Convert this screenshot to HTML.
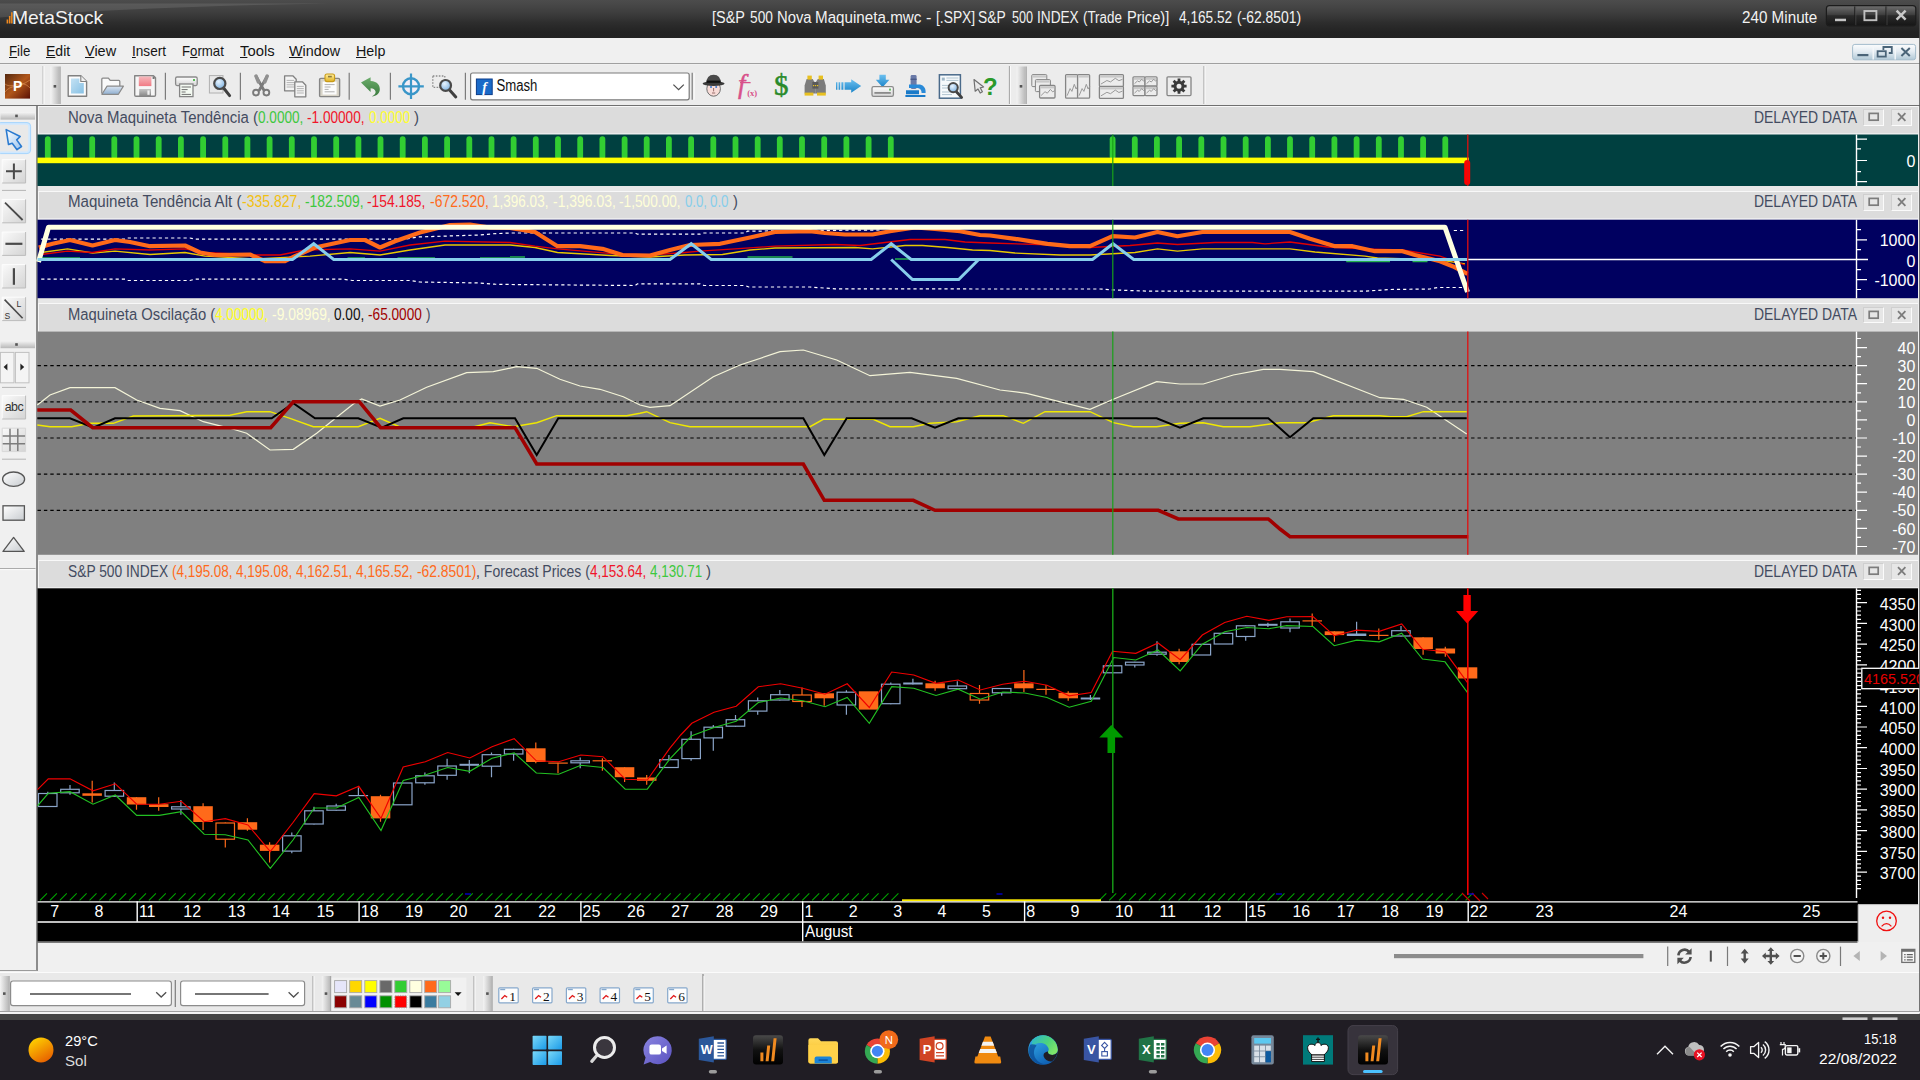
<!DOCTYPE html>
<html><head><meta charset="utf-8"><title>MetaStock</title><style>
*{box-sizing:border-box}
html,body{margin:0;padding:0}
body{width:1920px;height:1080px;position:relative;overflow:hidden;background:#f0f0f0;font-family:"Liberation Sans",sans-serif;}
.abs{position:absolute}
#title{left:0;top:0;width:1920px;height:38px;background:linear-gradient(180deg,#4c4c4c 0,#484848 4px,#3d3d3d 13px,#2d2d2d 23px,#232323 32px,#222 38px);color:#fff}
#title .t{position:absolute;white-space:nowrap;color:#f4f4f4}
#menu{left:0;top:38px;width:1920px;height:26px;background:#f0f0f0;border-bottom:1px solid #a0a0a0}

#menu u{text-decoration:underline;text-underline-offset:1.5px}
#tool{left:0;top:65px;width:1920px;height:41px;background:#ececec;border-bottom:1.2px solid #707070}
.hdr{left:37.5px;width:1880.5px;height:28.4px;background:#dcdcdc;border-top:1.3px solid #f8f8f8;border-bottom:1.3px solid #ececec;border-left:1.3px solid #f6f6f6}
.htx{left:0;width:1920px;height:28px}
.s{position:absolute;white-space:pre;line-height:1;transform-origin:0 0}
.htx .s{top:4.5px}
.hb{width:21px;height:16.5px;background:#e6e6e6;border:1px solid;border-color:#cfcfcf #fbfbfb #fbfbfb #cfcfcf}
.gap{left:37.5px;width:1880.5px;height:5.4px;background:#e7e7e7}
#left{left:0;top:106px;width:37.5px;height:865px;background:#f0f0f0;border-right:2px solid #8c8c8c;border-bottom:1px solid #9a9a9a}
.lb{position:absolute;left:2px;width:23.5px;height:23.5px;background:linear-gradient(135deg,#f6f6f6,#dadada);border:1px solid;border-color:#fdfdfd #c4c4c4 #c4c4c4 #fdfdfd}
#bot{left:0;top:972px;width:1920px;height:41px;background:#e9e9e9;border-top:1px solid #fbfbfb}
.combo{position:absolute;top:8.5px;height:25px;background:#fff;border:1px solid #8f8f8f;border-radius:2.5px}
#task{left:0;top:1014px;width:1920px;height:66px;background:#201d24;border-top:6px solid #454545}
#task .w{position:absolute;color:#fff;white-space:nowrap}
</style></head><body>
<div id="title" class="abs">
<span class="s" style="left:11.70px;top:7.8px;transform:scale(1.0161,1);color:#f2f2f2;font-size:19.0px;">MetaStock</span><span class="s" style="left:712.20px;top:10.0px;transform:scale(0.9254,1);color:#f2f2f2;font-size:15.6px;">[S&amp;P</span><span class="s" style="left:749.70px;top:10.0px;transform:scale(0.8799,1);color:#f2f2f2;font-size:15.6px;">500</span><span class="s" style="left:776.80px;top:10.0px;transform:scale(0.9501,1);color:#f2f2f2;font-size:15.6px;">Nova</span><span class="s" style="left:814.80px;top:10.0px;transform:scale(0.9740,1);color:#f2f2f2;font-size:15.6px;">Maquineta.mwc</span><span class="s" style="left:926.30px;top:10.0px;transform:scale(1.0396,1);color:#f2f2f2;font-size:15.6px;">-</span><span class="s" style="left:935.50px;top:10.0px;transform:scale(0.8865,1);color:#f2f2f2;font-size:15.6px;">[.SPX]</span><span class="s" style="left:978.05px;top:10.0px;transform:scale(0.8857,1);color:#f2f2f2;font-size:15.6px;">S&amp;P</span><span class="s" style="left:1011.80px;top:10.0px;transform:scale(0.8108,1);color:#f2f2f2;font-size:15.6px;">500</span><span class="s" style="left:1037.10px;top:10.0px;transform:scale(0.8746,1);color:#f2f2f2;font-size:15.6px;">INDEX</span><span class="s" style="left:1083.05px;top:10.0px;transform:scale(0.8575,1);color:#f2f2f2;font-size:15.6px;">(Trade</span><span class="s" style="left:1126.55px;top:10.0px;transform:scale(0.9374,1);color:#f2f2f2;font-size:15.6px;">Price)]</span><span class="s" style="left:1179.05px;top:10.0px;transform:scale(0.8754,1);color:#f2f2f2;font-size:15.6px;">4,165.52</span><span class="s" style="left:1236.80px;top:10.0px;transform:scale(0.8921,1);color:#f2f2f2;font-size:15.6px;">(-62.8501)</span><span class="s" style="left:1741.60px;top:10.0px;transform:scale(0.9757,1);color:#f2f2f2;font-size:15.6px;">240 Minute</span>
</div>
<div id="menu" class="abs"></div><span class="s" style="left:8.50px;top:44.0px;transform:scale(0.9097,1);color:#151515;font-size:14.6px;"><u>F</u>ile</span><span class="s" style="left:45.70px;top:44.0px;transform:scale(0.9619,1);color:#151515;font-size:14.6px;"><u>E</u>dit</span><span class="s" style="left:85.10px;top:44.0px;transform:scale(0.9910,1);color:#151515;font-size:14.6px;"><u>V</u>iew</span><span class="s" style="left:132.20px;top:44.0px;transform:scale(0.9312,1);color:#151515;font-size:14.6px;"><u>I</u>nsert</span><span class="s" style="left:182.20px;top:44.0px;transform:scale(0.9063,1);color:#151515;font-size:14.6px;">F<u>o</u>rmat</span><span class="s" style="left:239.50px;top:44.0px;transform:scale(1.0152,1);color:#151515;font-size:14.6px;"><u>T</u>ools</span><span class="s" style="left:289.10px;top:44.0px;transform:scale(0.9822,1);color:#151515;font-size:14.6px;"><u>W</u>indow</span><span class="s" style="left:355.70px;top:44.0px;transform:scale(0.9792,1);color:#151515;font-size:14.6px;"><u>H</u>elp</span>
<div id="tool" class="abs"></div>
<div id="left" class="abs"></div>
<div class="abs hdr" style="top:106px"></div>
<div class="abs htx" style="top:105px"><span class="s" style="left:68.00px;transform:scale(0.9582,.999);color:#434b60;font-size:15.6px;">Nova Maquineta Tendência (</span><span class="s" style="left:258.00px;transform:scale(0.8727,.999);color:#3ec83e;font-size:15.6px;">0.0000, </span><span class="s" style="left:307.20px;transform:scale(0.8726,.999);color:#f0142a;font-size:15.6px;">-1.00000, </span><span class="s" style="left:368.50px;transform:scale(0.8647,.999);color:#ffff30;font-size:15.6px;">0.0000 </span><span class="s" style="left:413.50px;transform:scale(0.9626,.999);color:#434b60;font-size:15.6px;">)</span><span class="s" style="left:1754.40px;transform:scale(0.8942,0.999);color:#434b60;font-size:15.6px;">DELAYED DATA</span></div>
<div class="abs hb" style="left:1863.3px;top:109.4px"><svg width="19" height="15" style="position:absolute;left:0;top:0"><rect x="5.2" y="3.4" width="9" height="6.8" fill="none" stroke="#7c7c7c" stroke-width="1.7"/></svg></div>
<div class="abs hb" style="left:1890.6px;top:109.4px"><svg width="19" height="15" style="position:absolute;left:0;top:0"><path d="M6 3.2l7.4 7.6M13.4 3.2l-7.4 7.6" stroke="#7c7c7c" stroke-width="1.8" fill="none"/></svg></div>
<div class="abs gap" style="top:185.8px"></div>
<div class="abs hdr" style="top:190.8px"></div>
<div class="abs htx" style="top:189.8px"><span class="s" style="left:68.00px;transform:scale(0.9681,.999);color:#434b60;font-size:15.6px;">Maquineta Tendência Alt (</span><span class="s" style="left:241.50px;transform:scale(0.9004,.999);color:#f2c010;font-size:15.6px;">-335.827, </span><span class="s" style="left:304.75px;transform:scale(0.8897,.999);color:#3ec83e;font-size:15.6px;">-182.509, </span><span class="s" style="left:367.25px;transform:scale(0.8862,.999);color:#f0142a;font-size:15.6px;">-154.185, </span><span class="s" style="left:429.50px;transform:scale(0.8940,.999);color:#ff6a1a;font-size:15.6px;">-672.520, </span><span class="s" style="left:492.30px;transform:scale(0.8676,.999);color:#ffffd8;font-size:15.6px;">1,396.03, </span><span class="s" style="left:552.50px;transform:scale(0.8943,.999);color:#ffffd8;font-size:15.6px;">-1,396.03, </span><span class="s" style="left:619.20px;transform:scale(0.8782,.999);color:#ffffd8;font-size:15.6px;">-1,500.00, </span><span class="s" style="left:684.70px;transform:scale(0.8467,.999);color:#87ceeb;font-size:15.6px;">0.0, </span><span class="s" style="left:710.40px;transform:scale(0.8533,.999);color:#87ceeb;font-size:15.6px;">0.0 </span><span class="s" style="left:732.60px;transform:scale(0.9433,.999);color:#434b60;font-size:15.6px;">)</span><span class="s" style="left:1754.40px;transform:scale(0.8942,0.999);color:#434b60;font-size:15.6px;">DELAYED DATA</span></div>
<div class="abs hb" style="left:1863.3px;top:194.20000000000002px"><svg width="19" height="15" style="position:absolute;left:0;top:0"><rect x="5.2" y="3.4" width="9" height="6.8" fill="none" stroke="#7c7c7c" stroke-width="1.7"/></svg></div>
<div class="abs hb" style="left:1890.6px;top:194.20000000000002px"><svg width="19" height="15" style="position:absolute;left:0;top:0"><path d="M6 3.2l7.4 7.6M13.4 3.2l-7.4 7.6" stroke="#7c7c7c" stroke-width="1.8" fill="none"/></svg></div>
<div class="abs gap" style="top:298.1px"></div>
<div class="abs hdr" style="top:303.2px"></div>
<div class="abs htx" style="top:302.2px"><span class="s" style="left:67.70px;transform:scale(0.9491,.999);color:#434b60;font-size:15.6px;">Maquineta Oscilação (</span><span class="s" style="left:215.00px;transform:scale(0.8716,.999);color:#ffff20;font-size:15.6px;">4.00000, </span><span class="s" style="left:271.70px;transform:scale(0.8911,.999);color:#ffffd8;font-size:15.6px;">-9.08969, </span><span class="s" style="left:334.30px;transform:scale(0.8712,.999);color:#101010;font-size:15.6px;">0.00, </span><span class="s" style="left:368.30px;transform:scale(0.8754,.999);color:#a00000;font-size:15.6px;">-65.0000 </span><span class="s" style="left:426.00px;transform:scale(0.8663,.999);color:#434b60;font-size:15.6px;">)</span><span class="s" style="left:1754.40px;transform:scale(0.8942,0.999);color:#434b60;font-size:15.6px;">DELAYED DATA</span></div>
<div class="abs hb" style="left:1863.3px;top:306.59999999999997px"><svg width="19" height="15" style="position:absolute;left:0;top:0"><rect x="5.2" y="3.4" width="9" height="6.8" fill="none" stroke="#7c7c7c" stroke-width="1.7"/></svg></div>
<div class="abs hb" style="left:1890.6px;top:306.59999999999997px"><svg width="19" height="15" style="position:absolute;left:0;top:0"><path d="M6 3.2l7.4 7.6M13.4 3.2l-7.4 7.6" stroke="#7c7c7c" stroke-width="1.8" fill="none"/></svg></div>
<div class="abs gap" style="top:554.7px"></div>
<div class="abs hdr" style="top:560px"></div>
<div class="abs htx" style="top:559px"><span class="s" style="left:67.70px;transform:scale(0.8841,.999);color:#434b60;font-size:15.6px;">S&amp;P 500 INDEX </span><span class="s" style="left:171.70px;transform:scale(0.8622,.999);color:#ff6a1a;font-size:15.6px;">(4,195.08, </span><span class="s" style="left:236.00px;transform:scale(0.8647,.999);color:#ff6a1a;font-size:15.6px;">4,195.08, </span><span class="s" style="left:296.00px;transform:scale(0.8647,.999);color:#ff6a1a;font-size:15.6px;">4,162.51, </span><span class="s" style="left:356.00px;transform:scale(0.8748,.999);color:#ff6a1a;font-size:15.6px;">4,165.52, </span><span class="s" style="left:416.70px;transform:scale(0.8881,.999);color:#ff6a1a;font-size:15.6px;">-62.8501)</span><span class="s" style="left:476.00px;transform:scale(0.9008,.999);color:#434b60;font-size:15.6px;">, Forecast Prices (</span><span class="s" style="left:590.00px;transform:scale(0.8647,.999);color:#f0142a;font-size:15.6px;">4,153.64, </span><span class="s" style="left:650.00px;transform:scale(0.8608,.999);color:#3ec83e;font-size:15.6px;">4,130.71 </span><span class="s" style="left:706.00px;transform:scale(0.9626,.999);color:#434b60;font-size:15.6px;">)</span><span class="s" style="left:1754.40px;transform:scale(0.8942,0.999);color:#434b60;font-size:15.6px;">DELAYED DATA</span></div>
<div class="abs hb" style="left:1863.3px;top:563.4px"><svg width="19" height="15" style="position:absolute;left:0;top:0"><rect x="5.2" y="3.4" width="9" height="6.8" fill="none" stroke="#7c7c7c" stroke-width="1.7"/></svg></div>
<div class="abs hb" style="left:1890.6px;top:563.4px"><svg width="19" height="15" style="position:absolute;left:0;top:0"><path d="M6 3.2l7.4 7.6M13.4 3.2l-7.4 7.6" stroke="#7c7c7c" stroke-width="1.8" fill="none"/></svg></div>
<div id="bot" class="abs"></div>
<div id="task" class="abs"></div><span class="s" style="left:64.70px;top:1033.9px;transform:scale(1.0094,1);color:#fff;font-size:14.5px;">29°C</span><span class="s" style="left:64.70px;top:1053.9px;transform:scale(1.0402,1);color:#dcdcdc;font-size:14.5px;">Sol</span><span class="s" style="left:1864.40px;top:1032.2px;transform:scale(0.9147,1);color:#fff;font-size:14.2px;">15:18</span><span class="s" style="left:1818.80px;top:1052.2px;transform:scale(1.0990,1);color:#fff;font-size:14.2px;">22/08/2022</span>
<svg class="abs" style="left:0;top:0" width="1920" height="1080" viewBox="0 0 1920 1080">
<rect x="37.5" y="134.5" width="1880.5" height="51.5" fill="#004040"/>
<rect x="44.9" y="136.3" width="5.8" height="23" rx="2.9" fill="#32cd32"/>
<rect x="67.1" y="136.3" width="5.8" height="23" rx="2.9" fill="#32cd32"/>
<rect x="89.3" y="136.3" width="5.8" height="23" rx="2.9" fill="#32cd32"/>
<rect x="111.4" y="136.3" width="5.8" height="23" rx="2.9" fill="#32cd32"/>
<rect x="133.6" y="136.3" width="5.8" height="23" rx="2.9" fill="#32cd32"/>
<rect x="155.8" y="136.3" width="5.8" height="23" rx="2.9" fill="#32cd32"/>
<rect x="178.0" y="136.3" width="5.8" height="23" rx="2.9" fill="#32cd32"/>
<rect x="200.2" y="136.3" width="5.8" height="23" rx="2.9" fill="#32cd32"/>
<rect x="222.4" y="136.3" width="5.8" height="23" rx="2.9" fill="#32cd32"/>
<rect x="244.5" y="136.3" width="5.8" height="23" rx="2.9" fill="#32cd32"/>
<rect x="266.7" y="136.3" width="5.8" height="23" rx="2.9" fill="#32cd32"/>
<rect x="288.9" y="136.3" width="5.8" height="23" rx="2.9" fill="#32cd32"/>
<rect x="311.1" y="136.3" width="5.8" height="23" rx="2.9" fill="#32cd32"/>
<rect x="333.3" y="136.3" width="5.8" height="23" rx="2.9" fill="#32cd32"/>
<rect x="355.5" y="136.3" width="5.8" height="23" rx="2.9" fill="#32cd32"/>
<rect x="377.6" y="136.3" width="5.8" height="23" rx="2.9" fill="#32cd32"/>
<rect x="399.8" y="136.3" width="5.8" height="23" rx="2.9" fill="#32cd32"/>
<rect x="422.0" y="136.3" width="5.8" height="23" rx="2.9" fill="#32cd32"/>
<rect x="444.2" y="136.3" width="5.8" height="23" rx="2.9" fill="#32cd32"/>
<rect x="466.4" y="136.3" width="5.8" height="23" rx="2.9" fill="#32cd32"/>
<rect x="488.6" y="136.3" width="5.8" height="23" rx="2.9" fill="#32cd32"/>
<rect x="510.7" y="136.3" width="5.8" height="23" rx="2.9" fill="#32cd32"/>
<rect x="532.9" y="136.3" width="5.8" height="23" rx="2.9" fill="#32cd32"/>
<rect x="555.1" y="136.3" width="5.8" height="23" rx="2.9" fill="#32cd32"/>
<rect x="577.3" y="136.3" width="5.8" height="23" rx="2.9" fill="#32cd32"/>
<rect x="599.5" y="136.3" width="5.8" height="23" rx="2.9" fill="#32cd32"/>
<rect x="621.7" y="136.3" width="5.8" height="23" rx="2.9" fill="#32cd32"/>
<rect x="643.8" y="136.3" width="5.8" height="23" rx="2.9" fill="#32cd32"/>
<rect x="666.0" y="136.3" width="5.8" height="23" rx="2.9" fill="#32cd32"/>
<rect x="688.2" y="136.3" width="5.8" height="23" rx="2.9" fill="#32cd32"/>
<rect x="710.4" y="136.3" width="5.8" height="23" rx="2.9" fill="#32cd32"/>
<rect x="732.6" y="136.3" width="5.8" height="23" rx="2.9" fill="#32cd32"/>
<rect x="754.8" y="136.3" width="5.8" height="23" rx="2.9" fill="#32cd32"/>
<rect x="776.9" y="136.3" width="5.8" height="23" rx="2.9" fill="#32cd32"/>
<rect x="799.1" y="136.3" width="5.8" height="23" rx="2.9" fill="#32cd32"/>
<rect x="821.3" y="136.3" width="5.8" height="23" rx="2.9" fill="#32cd32"/>
<rect x="843.5" y="136.3" width="5.8" height="23" rx="2.9" fill="#32cd32"/>
<rect x="865.7" y="136.3" width="5.8" height="23" rx="2.9" fill="#32cd32"/>
<rect x="887.9" y="136.3" width="5.8" height="23" rx="2.9" fill="#32cd32"/>
<rect x="1109.7" y="136.3" width="5.8" height="23" rx="2.9" fill="#32cd32"/>
<rect x="1131.9" y="136.3" width="5.8" height="23" rx="2.9" fill="#32cd32"/>
<rect x="1154.0" y="136.3" width="5.8" height="23" rx="2.9" fill="#32cd32"/>
<rect x="1176.2" y="136.3" width="5.8" height="23" rx="2.9" fill="#32cd32"/>
<rect x="1198.4" y="136.3" width="5.8" height="23" rx="2.9" fill="#32cd32"/>
<rect x="1220.6" y="136.3" width="5.8" height="23" rx="2.9" fill="#32cd32"/>
<rect x="1242.8" y="136.3" width="5.8" height="23" rx="2.9" fill="#32cd32"/>
<rect x="1265.0" y="136.3" width="5.8" height="23" rx="2.9" fill="#32cd32"/>
<rect x="1287.1" y="136.3" width="5.8" height="23" rx="2.9" fill="#32cd32"/>
<rect x="1309.3" y="136.3" width="5.8" height="23" rx="2.9" fill="#32cd32"/>
<rect x="1331.5" y="136.3" width="5.8" height="23" rx="2.9" fill="#32cd32"/>
<rect x="1353.7" y="136.3" width="5.8" height="23" rx="2.9" fill="#32cd32"/>
<rect x="1375.9" y="136.3" width="5.8" height="23" rx="2.9" fill="#32cd32"/>
<rect x="1398.1" y="136.3" width="5.8" height="23" rx="2.9" fill="#32cd32"/>
<rect x="1420.2" y="136.3" width="5.8" height="23" rx="2.9" fill="#32cd32"/>
<rect x="1442.4" y="136.3" width="5.8" height="23" rx="2.9" fill="#32cd32"/>
<rect x="37.5" y="157.6" width="1431.5" height="5.6" fill="#ffff00"/>
<rect x="1464.2" y="160" width="6" height="25" rx="3" fill="#ff0000"/>
<rect x="37.5" y="219.7" width="1880.5" height="78.5" fill="#000060"/>
<polyline points="41.2,239.2 125.0,239.2 127.5,238.0 190.0,238.0 195.0,239.2 405.0,239.2 417.5,237.0 480.0,235.0 492.5,233.8 510.0,233.0 635.0,233.0 637.5,234.2 700.0,234.2 702.5,233.0 745.0,233.0 747.5,231.2 810.0,230.5 880.0,230.0" fill="none" stroke="#ffffff" stroke-width="1.2" stroke-dasharray="3.2,3"/>
<polyline points="1453.8,230.5 1465.0,230.5" fill="none" stroke="#ffffff" stroke-width="1.2" stroke-dasharray="3.2,3"/>
<polyline points="41.2,279.2 125.0,279.2 127.5,280.5 190.0,280.5 195.0,279.2 342.5,279.2 352.5,280.5 410.0,280.5 420.0,282.0 480.0,283.0 495.0,284.2 510.0,284.5 635.0,285.5 637.5,283.8 700.0,283.8 703.8,285.5 745.0,285.5 748.8,287.0 810.0,287.0 835.0,288.8 990.0,289.0 1100.0,289.0 1115.0,290.0 1150.0,291.2 1365.0,291.2 1390.0,289.5 1430.0,289.0 1437.5,287.5 1465.0,287.5" fill="none" stroke="#ffffff" stroke-width="1.2" stroke-dasharray="3.2,3"/>
<line x1="1468" y1="259.5" x2="1868" y2="259.5" stroke="#ffffff" stroke-width="1.3"/>
<polyline points="41.2,258.0 80.0,258.0" fill="none" stroke="#22b14c" stroke-width="1.5" />
<polyline points="347.5,258.0 365.0,258.0" fill="none" stroke="#22b14c" stroke-width="1.5" />
<polyline points="397.5,258.0 435.0,258.0" fill="none" stroke="#22b14c" stroke-width="1.5" />
<polyline points="480.0,258.0 510.0,258.0" fill="none" stroke="#22b14c" stroke-width="1.5" />
<polyline points="510.0,257.0 525.0,257.0" fill="none" stroke="#22b14c" stroke-width="1.5" />
<polyline points="747.5,257.0 792.5,257.0" fill="none" stroke="#22b14c" stroke-width="1.5" />
<polyline points="895.0,259.0 910.0,259.0" fill="none" stroke="#22b14c" stroke-width="1.5" />
<polyline points="1346.2,261.5 1390.0,261.5" fill="none" stroke="#22b14c" stroke-width="1.5" />
<polyline points="1412.5,261.5 1427.5,261.5" fill="none" stroke="#22b14c" stroke-width="1.5" />
<polyline points="41.2,252.5 67.5,248.8 92.5,253.0 115.0,251.2 150.0,254.5 185.0,252.5 205.0,256.2 255.0,258.8 310.0,256.2 350.0,252.5 380.0,255.0 410.0,250.0 445.0,245.0 510.0,245.0 535.0,247.5 557.5,252.5 610.0,255.5 650.0,257.0 685.0,255.0 722.5,254.5 750.0,250.0 775.0,248.0 855.0,247.5 872.5,248.8 905.0,245.5 922.5,245.5 947.5,247.5 972.5,250.0 990.0,250.5 1015.0,253.0 1060.0,255.0 1090.0,255.0 1135.0,252.5 1157.5,248.8 1177.5,251.2 1202.5,248.8 1290.0,248.8 1315.0,252.0 1365.0,256.2 1377.5,258.0 1440.0,260.0 1465.0,263.8" fill="none" stroke="#e8c800" stroke-width="1.3" />
<polyline points="41.2,254.5 67.5,251.2 92.5,252.5 115.0,248.8 150.0,250.0 185.0,248.8 205.0,252.5 255.0,255.0 280.0,255.0 305.0,250.0 350.0,248.8 380.0,251.2 410.0,245.0 445.0,241.2 510.0,242.5 535.0,246.2 557.5,248.8 615.0,253.8 650.0,255.0 685.0,252.5 700.0,251.2 735.0,248.8 775.0,246.2 835.0,244.5 860.0,245.5 910.0,239.5 945.0,239.5 965.0,242.0 990.0,243.0 1040.0,244.5 1090.0,247.5 1130.0,245.5 1157.5,243.0 1177.5,244.5 1215.0,242.5 1252.5,242.5 1265.0,243.8 1290.0,242.0 1327.5,247.0 1365.0,248.8 1402.5,250.0 1440.0,256.2 1465.0,265.0" fill="none" stroke="#e00000" stroke-width="1.3" />
<polyline points="38.8,247.5 52.5,243.8 70.0,240.0 92.5,245.5 115.0,240.0 130.0,242.0 150.0,246.2 185.0,245.5 200.0,252.5 215.0,255.0 250.0,254.5 265.0,261.2 285.0,261.2 295.0,256.2 315.0,247.5 350.0,240.0 365.0,240.0 380.0,247.5 395.0,241.2 420.0,232.5 450.0,225.0 470.0,224.5 490.0,227.5 510.0,228.0 535.0,232.0 557.5,246.2 580.0,246.2 602.5,248.8 622.5,255.0 650.0,255.5 670.0,250.0 690.0,245.0 720.0,243.8 750.0,237.5 775.0,232.0 810.0,231.2 825.0,233.0 845.0,234.5 872.5,234.5 890.0,231.2 915.0,227.5 935.0,228.8 960.0,231.2 980.0,235.0 990.0,235.5 1015.0,238.8 1047.5,243.8 1070.0,246.2 1090.0,246.2 1112.5,236.2 1135.0,237.5 1157.5,232.0 1177.5,236.2 1202.5,232.0 1290.0,232.0 1310.0,238.8 1335.0,246.2 1352.5,246.2 1375.0,251.2 1402.5,251.2 1415.0,255.0 1440.0,261.2 1452.5,266.2 1467.5,273.8" fill="none" stroke="#ff6a1a" stroke-width="4.2" stroke-linejoin="round"/>
<polyline points="38.5,262.0 48.5,227.3 1445.0,227.3 1467.5,292.0" fill="none" stroke="#ffffe0" stroke-width="5" stroke-linejoin="round"/>
<polyline points="37.5,259.5 292.5,259.5 313.7,243.7 333.7,259.5 670.0,259.5 691.2,243.7 711.2,259.5 871.2,259.5 891.2,243.7 911.2,259.5 1092.5,259.5 1113.0,243.7 1133.7,259.5 1467.5,259.5" fill="none" stroke="#87ceeb" stroke-width="3" stroke-linejoin="miter"/>
<polyline points="891.2,259.5 912.5,279.5 958.7,279.5 978.7,259.5" fill="none" stroke="#87ceeb" stroke-width="3" />
<rect x="37.5" y="331.5" width="1880.5" height="223.29999999999995" fill="#808080"/>
<line x1="37.5" y1="365.7" x2="1856.5" y2="365.7" stroke="#000" stroke-width="1.2" stroke-dasharray="3.4,3"/>
<line x1="37.5" y1="401.8" x2="1856.5" y2="401.8" stroke="#000" stroke-width="1.2" stroke-dasharray="3.4,3"/>
<line x1="37.5" y1="438" x2="1856.5" y2="438" stroke="#000" stroke-width="1.2" stroke-dasharray="3.4,3"/>
<line x1="37.5" y1="474.1" x2="1856.5" y2="474.1" stroke="#000" stroke-width="1.2" stroke-dasharray="3.4,3"/>
<line x1="37.5" y1="510.3" x2="1856.5" y2="510.3" stroke="#000" stroke-width="1.2" stroke-dasharray="3.4,3"/>
<polyline points="37.3,405.0 50.0,395.0 70.0,387.7 115.0,387.7 136.7,400.0 160.0,408.3 180.0,410.7 203.3,421.7 230.0,428.3 246.7,433.3 270.0,450.0 293.3,449.3 316.7,433.3 353.3,404.0 361.7,399.0 380.0,406.0 400.0,400.0 426.7,387.3 466.7,372.7 493.3,371.7 516.7,366.7 536.7,368.3 560.0,379.3 580.0,386.0 600.0,389.3 623.3,396.7 640.0,405.0 650.0,407.3 670.0,405.7 713.3,376.7 740.0,365.0 780.0,351.7 803.3,350.0 836.7,360.0 870.0,375.7 910.0,372.3 956.7,378.3 1000.0,390.0 1026.7,393.3 1090.0,409.3 1113.3,399.3 1156.7,381.7 1180.0,384.0 1203.3,384.0 1233.3,375.0 1263.3,369.3 1280.0,369.3 1313.3,371.7 1380.0,397.7 1403.3,399.3 1426.7,407.3 1466.7,434.0" fill="none" stroke="#f4f4d8" stroke-width="1.2" />
<polyline points="37.3,425.0 50.0,426.7 71.7,426.7 90.0,423.3 113.3,423.3 133.3,416.0 230.0,415.3 246.7,411.7 270.0,411.7 290.0,418.3 313.3,426.7 358.3,426.7 380.0,418.3 400.0,427.0 473.3,427.0 490.0,422.7 513.3,426.7 536.7,422.7 556.7,415.7 626.7,415.7 640.0,413.3 646.7,411.7 670.0,422.7 690.0,426.7 810.0,426.7 823.3,419.3 873.3,419.3 890.0,426.7 913.3,426.7 930.0,423.3 956.7,421.7 980.0,415.7 1003.3,415.7 1023.3,423.3 1045.0,411.7 1090.0,411.7 1113.3,422.7 1133.3,426.7 1156.7,426.7 1180.0,423.3 1203.3,422.7 1223.3,426.7 1250.0,426.7 1280.0,422.7 1306.7,422.7 1333.3,415.7 1380.0,415.7 1390.0,416.7 1406.7,416.7 1423.3,411.7 1466.7,411.7" fill="none" stroke="#f0e800" stroke-width="1.4" />
<polyline points="37.3,418.3 70.0,418.3 93.3,427.7 115.0,418.3 271.7,418.3 293.3,403.3 315.0,418.3 358.3,418.3 381.7,427.7 403.3,418.3 515.0,418.3 536.7,455.0 558.3,418.3 640.0,418.3 803.3,418.3 824.3,455.0 846.7,418.3 911.7,418.3 935.0,427.7 958.3,418.3 1156.7,418.3 1180.0,427.7 1203.3,418.3 1268.3,418.3 1280.0,428.3 1290.0,437.3 1313.3,418.3 1466.7,418.3" fill="none" stroke="#000" stroke-width="2" />
<polyline points="37.3,410.0 70.7,410.0 92.7,427.7 270.7,427.7 293.3,401.7 359.3,401.7 380.7,427.7 515.0,427.7 536.7,464.0 640.0,464.0 803.3,464.0 824.3,500.3 913.3,500.3 935.0,510.3 1158.3,510.3 1178.3,519.0 1268.3,519.0 1280.0,529.0 1290.0,536.7 1468.3,536.7" fill="none" stroke="#a00000" stroke-width="3.6" stroke-linejoin="miter"/>
<rect x="37.5" y="588.3" width="1880.5" height="352.9000000000001" fill="#000"/>
<rect x="37.5" y="941.2" width="1820.0" height="1.5" fill="#484848"/>
<path d="M40.0 900.3l7-7 M49.9 900.3l7-7 M59.8 900.3l7-7 M69.7 900.3l7-7 M79.6 900.3l7-7 M89.5 900.3l7-7 M99.4 900.3l7-7 M109.3 900.3l7-7 M119.2 900.3l7-7 M129.1 900.3l7-7 M139.0 900.3l7-7 M148.9 900.3l7-7 M158.8 900.3l7-7 M168.7 900.3l7-7 M178.6 900.3l7-7 M188.5 900.3l7-7 M198.4 900.3l7-7 M208.3 900.3l7-7 M218.2 900.3l7-7 M228.1 900.3l7-7 M238.0 900.3l7-7 M247.9 900.3l7-7 M257.8 900.3l7-7 M267.7 900.3l7-7 M277.6 900.3l7-7 M287.5 900.3l7-7 M297.4 900.3l7-7 M307.3 900.3l7-7 M317.2 900.3l7-7 M327.1 900.3l7-7 M337.0 900.3l7-7 M346.9 900.3l7-7 M356.8 900.3l7-7 M366.7 900.3l7-7 M376.6 900.3l7-7 M386.5 900.3l7-7 M396.4 900.3l7-7 M406.3 900.3l7-7 M416.2 900.3l7-7 M426.1 900.3l7-7 M436.0 900.3l7-7 M445.9 900.3l7-7 M455.8 900.3l7-7 M465.7 900.3l7-7 M475.6 900.3l7-7 M485.5 900.3l7-7 M495.4 900.3l7-7 M505.3 900.3l7-7 M515.2 900.3l7-7 M525.1 900.3l7-7 M535.0 900.3l7-7 M544.9 900.3l7-7 M554.8 900.3l7-7 M564.7 900.3l7-7 M574.6 900.3l7-7 M584.5 900.3l7-7 M594.4 900.3l7-7 M604.3 900.3l7-7 M614.2 900.3l7-7 M624.1 900.3l7-7 M634.0 900.3l7-7 M643.9 900.3l7-7 M653.8 900.3l7-7 M663.7 900.3l7-7 M673.6 900.3l7-7 M683.5 900.3l7-7 M693.4 900.3l7-7 M703.3 900.3l7-7 M713.2 900.3l7-7 M723.1 900.3l7-7 M733.0 900.3l7-7 M742.9 900.3l7-7 M752.8 900.3l7-7 M762.7 900.3l7-7 M772.6 900.3l7-7 M782.5 900.3l7-7 M792.4 900.3l7-7 M802.3 900.3l7-7 M812.2 900.3l7-7 M822.1 900.3l7-7 M832.0 900.3l7-7 M841.9 900.3l7-7 M851.8 900.3l7-7 M861.7 900.3l7-7 M871.6 900.3l7-7 M881.5 900.3l7-7 M891.4 900.3l7-7 M1099.3 900.3l7-7 M1109.2 900.3l7-7 M1119.1 900.3l7-7 M1129.0 900.3l7-7 M1138.9 900.3l7-7 M1148.8 900.3l7-7 M1158.7 900.3l7-7 M1168.6 900.3l7-7 M1178.5 900.3l7-7 M1188.4 900.3l7-7 M1198.3 900.3l7-7 M1208.2 900.3l7-7 M1218.1 900.3l7-7 M1228.0 900.3l7-7 M1237.9 900.3l7-7 M1247.8 900.3l7-7 M1257.7 900.3l7-7 M1267.6 900.3l7-7 M1277.5 900.3l7-7 M1287.4 900.3l7-7 M1297.3 900.3l7-7 M1307.2 900.3l7-7 M1317.1 900.3l7-7 M1327.0 900.3l7-7 M1336.9 900.3l7-7 M1346.8 900.3l7-7 M1356.7 900.3l7-7 M1366.6 900.3l7-7 M1376.5 900.3l7-7 M1386.4 900.3l7-7 M1396.3 900.3l7-7 M1406.2 900.3l7-7 M1416.1 900.3l7-7 M1426.0 900.3l7-7 M1435.9 900.3l7-7 M1445.8 900.3l7-7 M1455.7 900.3l7-7 M1465.6 900.3l7-7" stroke="#00a000" stroke-width="1.1" fill="none"/>
<path d="M1462 893l8 8M1472 893l8 8M1482 893l6 6" stroke="#d00000" stroke-width="1.1" fill="none"/>
<rect x="902" y="899.3" width="199" height="2" fill="#ffee00"/>
<rect x="465" y="893.3" width="6" height="1.4" fill="#0000c8"/>
<rect x="996.5" y="893.3" width="6" height="1.4" fill="#0000c8"/>
<rect x="1276" y="893.3" width="6" height="1.4" fill="#0000c8"/>
<rect x="1468" y="893.3" width="6" height="1.4" fill="#0000c8"/>
<clipPath id="c4"><rect x="37.5" y="588.3" width="1880.5" height="320"/></clipPath><g clip-path="url(#c4)">
<line x1="47.8" y1="791.7" x2="47.8" y2="807.0" stroke="#8aa4c8" stroke-width="1.2"/>
<rect x="38.5" y="793.5" width="18.5" height="13.0" fill="#000" stroke="#8aa4c8" stroke-width="1.2"/>
<line x1="70.0" y1="785.0" x2="70.0" y2="794.7" stroke="#8aa4c8" stroke-width="1.2"/>
<rect x="60.7" y="789.3" width="18.5" height="3.5" fill="#000" stroke="#8aa4c8" stroke-width="1.2"/>
<line x1="92.2" y1="780.8" x2="92.2" y2="802.5" stroke="#ff6a1a" stroke-width="1.2"/>
<rect x="82.4" y="793.3" width="19.5" height="2.5" fill="#ff6a1a"/>
<line x1="114.3" y1="782.5" x2="114.3" y2="796.7" stroke="#8aa4c8" stroke-width="1.2"/>
<rect x="105.1" y="790.5" width="18.5" height="5.7" fill="#000" stroke="#8aa4c8" stroke-width="1.2"/>
<line x1="136.5" y1="797.2" x2="136.5" y2="809.7" stroke="#ff6a1a" stroke-width="1.2"/>
<rect x="126.8" y="797.2" width="19.5" height="7.3" fill="#ff6a1a"/>
<line x1="158.7" y1="797.2" x2="158.7" y2="810.8" stroke="#ff6a1a" stroke-width="1.2"/>
<rect x="149.0" y="804.2" width="19.5" height="2.8" fill="#ff6a1a"/>
<line x1="180.9" y1="800.0" x2="180.9" y2="814.7" stroke="#8aa4c8" stroke-width="1.2"/>
<rect x="171.6" y="806.8" width="18.5" height="2.2" fill="#000" stroke="#8aa4c8" stroke-width="1.2"/>
<line x1="203.1" y1="803.3" x2="203.1" y2="830.0" stroke="#ff6a1a" stroke-width="1.2"/>
<rect x="193.3" y="806.2" width="19.5" height="15.8" fill="#ff6a1a"/>
<line x1="225.3" y1="822.5" x2="225.3" y2="847.5" stroke="#ff6a1a" stroke-width="1.2"/>
<rect x="216.0" y="823.0" width="18.5" height="16.2" fill="#000" stroke="#ff6a1a" stroke-width="1.2"/>
<line x1="247.4" y1="818.3" x2="247.4" y2="830.8" stroke="#ff6a1a" stroke-width="1.2"/>
<rect x="237.7" y="822.2" width="19.5" height="7.5" fill="#ff6a1a"/>
<line x1="269.6" y1="842.2" x2="269.6" y2="862.5" stroke="#ff6a1a" stroke-width="1.2"/>
<rect x="259.9" y="844.7" width="19.5" height="6.2" fill="#ff6a1a"/>
<line x1="291.8" y1="832.5" x2="291.8" y2="853.3" stroke="#8aa4c8" stroke-width="1.2"/>
<rect x="282.6" y="835.8" width="18.5" height="15.3" fill="#000" stroke="#8aa4c8" stroke-width="1.2"/>
<line x1="314.0" y1="806.7" x2="314.0" y2="824.5" stroke="#8aa4c8" stroke-width="1.2"/>
<rect x="304.7" y="810.8" width="18.5" height="13.2" fill="#000" stroke="#8aa4c8" stroke-width="1.2"/>
<line x1="336.2" y1="803.7" x2="336.2" y2="810.7" stroke="#8aa4c8" stroke-width="1.2"/>
<rect x="326.9" y="806.0" width="18.5" height="4.2" fill="#000" stroke="#8aa4c8" stroke-width="1.2"/>
<line x1="358.4" y1="787.5" x2="358.4" y2="795.3" stroke="#8aa4c8" stroke-width="1.2"/>
<rect x="348.6" y="795.0" width="19.5" height="1.2" fill="#8aa4c8"/>
<line x1="380.5" y1="794.7" x2="380.5" y2="821.7" stroke="#ff6a1a" stroke-width="1.2"/>
<rect x="370.8" y="796.2" width="19.5" height="22.2" fill="#ff6a1a"/>
<rect x="393.5" y="783.0" width="18.5" height="21.8" fill="#000" stroke="#8aa4c8" stroke-width="1.2"/>
<line x1="424.9" y1="772.5" x2="424.9" y2="784.7" stroke="#8aa4c8" stroke-width="1.2"/>
<rect x="415.7" y="775.8" width="18.5" height="7.0" fill="#000" stroke="#8aa4c8" stroke-width="1.2"/>
<line x1="447.1" y1="758.7" x2="447.1" y2="779.7" stroke="#8aa4c8" stroke-width="1.2"/>
<rect x="437.8" y="766.0" width="18.5" height="9.3" fill="#000" stroke="#8aa4c8" stroke-width="1.2"/>
<line x1="469.3" y1="760.0" x2="469.3" y2="773.3" stroke="#8aa4c8" stroke-width="1.2"/>
<rect x="459.5" y="763.8" width="19.5" height="2.0" fill="#8aa4c8"/>
<line x1="491.5" y1="752.5" x2="491.5" y2="777.2" stroke="#8aa4c8" stroke-width="1.2"/>
<rect x="482.2" y="754.7" width="18.5" height="11.5" fill="#000" stroke="#8aa4c8" stroke-width="1.2"/>
<line x1="513.6" y1="748.8" x2="513.6" y2="760.8" stroke="#8aa4c8" stroke-width="1.2"/>
<rect x="504.4" y="749.3" width="18.5" height="4.7" fill="#000" stroke="#8aa4c8" stroke-width="1.2"/>
<line x1="535.8" y1="742.5" x2="535.8" y2="763.3" stroke="#ff6a1a" stroke-width="1.2"/>
<rect x="526.1" y="748.3" width="19.5" height="13.7" fill="#ff6a1a"/>
<line x1="558.0" y1="762.8" x2="558.0" y2="773.3" stroke="#ff6a1a" stroke-width="1.2"/>
<rect x="548.3" y="762.5" width="19.5" height="1.2" fill="#ff6a1a"/>
<line x1="580.2" y1="757.5" x2="580.2" y2="768.3" stroke="#8aa4c8" stroke-width="1.2"/>
<rect x="570.9" y="760.8" width="18.5" height="2.0" fill="#000" stroke="#8aa4c8" stroke-width="1.2"/>
<line x1="602.4" y1="758.3" x2="602.4" y2="770.8" stroke="#ff6a1a" stroke-width="1.2"/>
<rect x="592.6" y="760.2" width="19.5" height="1.2" fill="#ff6a1a"/>
<line x1="624.6" y1="767.2" x2="624.6" y2="782.0" stroke="#ff6a1a" stroke-width="1.2"/>
<rect x="614.8" y="767.2" width="19.5" height="10.0" fill="#ff6a1a"/>
<line x1="646.7" y1="775.0" x2="646.7" y2="784.7" stroke="#ff6a1a" stroke-width="1.2"/>
<rect x="637.0" y="777.5" width="19.5" height="3.3" fill="#ff6a1a"/>
<line x1="668.9" y1="755.0" x2="668.9" y2="768.0" stroke="#8aa4c8" stroke-width="1.2"/>
<rect x="659.7" y="759.7" width="18.5" height="7.8" fill="#000" stroke="#8aa4c8" stroke-width="1.2"/>
<line x1="691.1" y1="731.3" x2="691.1" y2="760.8" stroke="#8aa4c8" stroke-width="1.2"/>
<rect x="681.9" y="739.3" width="18.5" height="19.3" fill="#000" stroke="#8aa4c8" stroke-width="1.2"/>
<line x1="713.3" y1="725.0" x2="713.3" y2="750.8" stroke="#8aa4c8" stroke-width="1.2"/>
<rect x="704.0" y="727.2" width="18.5" height="10.7" fill="#000" stroke="#8aa4c8" stroke-width="1.2"/>
<line x1="735.5" y1="715.0" x2="735.5" y2="726.7" stroke="#8aa4c8" stroke-width="1.2"/>
<rect x="726.2" y="719.7" width="18.5" height="6.5" fill="#000" stroke="#8aa4c8" stroke-width="1.2"/>
<line x1="757.7" y1="697.5" x2="757.7" y2="714.7" stroke="#8aa4c8" stroke-width="1.2"/>
<rect x="748.4" y="700.8" width="18.5" height="10.3" fill="#000" stroke="#8aa4c8" stroke-width="1.2"/>
<line x1="779.8" y1="690.0" x2="779.8" y2="700.5" stroke="#8aa4c8" stroke-width="1.2"/>
<rect x="770.6" y="694.7" width="18.5" height="5.3" fill="#000" stroke="#8aa4c8" stroke-width="1.2"/>
<line x1="802.0" y1="687.5" x2="802.0" y2="707.0" stroke="#ff6a1a" stroke-width="1.2"/>
<rect x="792.8" y="695.0" width="18.5" height="6.5" fill="#000" stroke="#ff6a1a" stroke-width="1.2"/>
<line x1="824.2" y1="693.3" x2="824.2" y2="705.8" stroke="#ff6a1a" stroke-width="1.2"/>
<rect x="814.5" y="693.3" width="19.5" height="5.0" fill="#ff6a1a"/>
<line x1="846.4" y1="690.3" x2="846.4" y2="714.7" stroke="#8aa4c8" stroke-width="1.2"/>
<rect x="837.1" y="692.2" width="18.5" height="12.8" fill="#000" stroke="#8aa4c8" stroke-width="1.2"/>
<rect x="858.8" y="691.3" width="19.5" height="18.3" fill="#ff6a1a"/>
<line x1="890.8" y1="682.5" x2="890.8" y2="704.2" stroke="#8aa4c8" stroke-width="1.2"/>
<rect x="881.5" y="684.2" width="18.5" height="19.5" fill="#000" stroke="#8aa4c8" stroke-width="1.2"/>
<line x1="912.9" y1="678.7" x2="912.9" y2="684.5" stroke="#8aa4c8" stroke-width="1.2"/>
<rect x="903.2" y="682.5" width="19.5" height="2.0" fill="#8aa4c8"/>
<line x1="935.1" y1="680.8" x2="935.1" y2="690.8" stroke="#ff6a1a" stroke-width="1.2"/>
<rect x="925.4" y="683.3" width="19.5" height="5.0" fill="#ff6a1a"/>
<line x1="957.3" y1="681.3" x2="957.3" y2="690.0" stroke="#8aa4c8" stroke-width="1.2"/>
<rect x="948.1" y="686.0" width="18.5" height="2.7" fill="#000" stroke="#8aa4c8" stroke-width="1.2"/>
<line x1="979.5" y1="685.0" x2="979.5" y2="703.7" stroke="#ff6a1a" stroke-width="1.2"/>
<rect x="970.2" y="693.5" width="18.5" height="6.5" fill="#000" stroke="#ff6a1a" stroke-width="1.2"/>
<line x1="1001.7" y1="688.0" x2="1001.7" y2="695.8" stroke="#8aa4c8" stroke-width="1.2"/>
<rect x="992.4" y="688.5" width="18.5" height="4.3" fill="#000" stroke="#8aa4c8" stroke-width="1.2"/>
<line x1="1023.9" y1="670.0" x2="1023.9" y2="692.0" stroke="#ff6a1a" stroke-width="1.2"/>
<rect x="1014.1" y="683.3" width="19.5" height="5.0" fill="#ff6a1a"/>
<line x1="1046.0" y1="685.0" x2="1046.0" y2="694.7" stroke="#ff6a1a" stroke-width="1.2"/>
<rect x="1036.3" y="688.8" width="19.5" height="1.2" fill="#ff6a1a"/>
<line x1="1068.2" y1="691.2" x2="1068.2" y2="700.8" stroke="#ff6a1a" stroke-width="1.2"/>
<rect x="1058.5" y="692.8" width="19.5" height="5.5" fill="#ff6a1a"/>
<line x1="1090.4" y1="695.0" x2="1090.4" y2="700.0" stroke="#8aa4c8" stroke-width="1.2"/>
<rect x="1080.7" y="697.5" width="19.5" height="2.0" fill="#8aa4c8"/>
<rect x="1103.3" y="665.8" width="18.5" height="7.0" fill="#000" stroke="#8aa4c8" stroke-width="1.2"/>
<line x1="1134.8" y1="661.7" x2="1134.8" y2="667.5" stroke="#8aa4c8" stroke-width="1.2"/>
<rect x="1125.5" y="662.2" width="18.5" height="2.8" fill="#000" stroke="#8aa4c8" stroke-width="1.2"/>
<line x1="1157.0" y1="641.3" x2="1157.0" y2="655.8" stroke="#8aa4c8" stroke-width="1.2"/>
<rect x="1147.7" y="652.2" width="18.5" height="2.0" fill="#000" stroke="#8aa4c8" stroke-width="1.2"/>
<line x1="1179.1" y1="648.7" x2="1179.1" y2="664.2" stroke="#ff6a1a" stroke-width="1.2"/>
<rect x="1169.4" y="651.3" width="19.5" height="10.7" fill="#ff6a1a"/>
<rect x="1192.1" y="644.3" width="18.5" height="10.7" fill="#000" stroke="#8aa4c8" stroke-width="1.2"/>
<rect x="1214.2" y="633.3" width="18.5" height="10.7" fill="#000" stroke="#8aa4c8" stroke-width="1.2"/>
<line x1="1245.7" y1="625.3" x2="1245.7" y2="640.8" stroke="#8aa4c8" stroke-width="1.2"/>
<rect x="1236.4" y="625.8" width="18.5" height="10.7" fill="#000" stroke="#8aa4c8" stroke-width="1.2"/>
<line x1="1267.9" y1="622.8" x2="1267.9" y2="627.0" stroke="#8aa4c8" stroke-width="1.2"/>
<rect x="1258.1" y="623.8" width="19.5" height="2.0" fill="#8aa4c8"/>
<line x1="1290.0" y1="618.5" x2="1290.0" y2="632.3" stroke="#8aa4c8" stroke-width="1.2"/>
<rect x="1280.8" y="621.8" width="18.5" height="6.2" fill="#000" stroke="#8aa4c8" stroke-width="1.2"/>
<line x1="1312.2" y1="613.5" x2="1312.2" y2="626.0" stroke="#ff6a1a" stroke-width="1.2"/>
<rect x="1302.5" y="620.3" width="19.5" height="1.2" fill="#ff6a1a"/>
<line x1="1334.4" y1="631.3" x2="1334.4" y2="641.8" stroke="#ff6a1a" stroke-width="1.2"/>
<rect x="1324.7" y="631.3" width="19.5" height="3.8" fill="#ff6a1a"/>
<line x1="1356.6" y1="621.8" x2="1356.6" y2="636.0" stroke="#8aa4c8" stroke-width="1.2"/>
<rect x="1346.8" y="633.5" width="19.5" height="2.5" fill="#8aa4c8"/>
<line x1="1378.8" y1="628.5" x2="1378.8" y2="639.7" stroke="#ff6a1a" stroke-width="1.2"/>
<rect x="1369.0" y="634.8" width="19.5" height="1.2" fill="#ff6a1a"/>
<line x1="1401.0" y1="626.0" x2="1401.0" y2="636.5" stroke="#8aa4c8" stroke-width="1.2"/>
<rect x="1391.7" y="630.7" width="18.5" height="5.3" fill="#000" stroke="#8aa4c8" stroke-width="1.2"/>
<line x1="1423.1" y1="637.3" x2="1423.1" y2="654.7" stroke="#ff6a1a" stroke-width="1.2"/>
<rect x="1413.4" y="637.3" width="19.5" height="11.7" fill="#ff6a1a"/>
<line x1="1445.3" y1="646.8" x2="1445.3" y2="656.8" stroke="#ff6a1a" stroke-width="1.2"/>
<rect x="1435.6" y="648.5" width="19.5" height="5.0" fill="#ff6a1a"/>
<rect x="1457.8" y="667.3" width="19.5" height="11.2" fill="#ff6a1a"/>
</g>
<polyline points="37.5,805.8 48.3,793.3 70.0,791.7 93.0,804.2 115.3,795.0 136.7,815.3 159.2,815.3 181.3,811.7 204.2,834.2 225.3,834.7 248.0,840.0 270.3,868.3 293.0,840.0 314.2,808.0 336.3,808.0 358.8,797.5 381.0,830.5 403.2,780.5 425.3,775.0 447.7,767.5 469.8,771.3 492.0,758.3 514.2,752.8 536.3,773.0 558.7,774.2 580.8,765.3 603.0,767.5 625.2,789.2 647.3,789.2 669.7,759.2 691.8,735.8 714.0,727.5 736.2,721.3 758.3,702.5 780.7,698.0 802.8,700.8 825.0,706.7 847.2,697.5 869.3,723.3 891.7,686.7 913.8,688.3 936.0,695.5 958.2,689.2 980.3,699.2 1002.7,692.0 1024.8,693.0 1047.0,697.5 1069.2,707.2 1091.3,701.3 1113.7,657.5 1135.8,660.0 1158.0,650.0 1180.2,670.8 1202.3,644.2 1224.7,631.7 1246.8,627.5 1269.0,628.7 1286.7,625.7 1313.0,626.5 1334.2,645.7 1356.7,640.2 1379.2,641.8 1401.7,633.2 1422.5,659.0 1445.0,661.8 1467.5,692.7" fill="none" stroke="#22c022" stroke-width="1.15" />
<polyline points="37.5,789.7 48.3,778.8 70.0,778.8 93.0,790.8 115.3,783.8 136.7,804.2 159.2,804.2 181.3,801.3 204.2,821.7 225.3,818.7 248.0,825.0 270.3,851.7 293.0,822.5 314.2,793.7 336.3,795.8 358.8,786.3 381.0,818.3 403.2,767.0 425.3,761.7 447.7,752.5 469.8,758.0 492.0,746.7 514.2,738.7 536.3,760.8 558.7,761.7 580.8,755.0 603.0,756.7 625.2,779.2 647.3,780.0 669.7,748.3 680.7,735.0 691.8,723.3 714.0,712.2 736.2,706.3 758.3,686.7 780.7,683.8 802.8,688.3 825.0,694.2 847.2,683.8 869.3,707.5 891.7,672.0 913.8,675.0 936.0,683.3 958.2,680.0 980.3,690.0 1002.7,684.2 1024.8,681.3 1047.0,685.3 1069.2,695.8 1091.3,692.5 1112.5,651.3 1135.8,653.3 1158.0,643.0 1180.2,659.7 1202.3,635.0 1224.7,622.5 1246.8,616.3 1269.0,620.3 1286.7,616.8 1313.0,616.5 1334.2,635.7 1356.7,630.2 1379.2,631.3 1401.7,624.0 1422.5,649.3 1445.0,651.8 1467.5,682.7" fill="none" stroke="#f00000" stroke-width="1.15" />
<line x1="1112.8" y1="134.5" x2="1112.8" y2="186" stroke="#18a018" stroke-width="1.2"/>
<line x1="1467.8" y1="134.5" x2="1467.8" y2="186" stroke="#e01010" stroke-width="1.3"/>
<line x1="1112.8" y1="219.7" x2="1112.8" y2="298.2" stroke="#18a018" stroke-width="1.2"/>
<line x1="1467.8" y1="219.7" x2="1467.8" y2="298.2" stroke="#e01010" stroke-width="1.3"/>
<line x1="1112.8" y1="331.5" x2="1112.8" y2="554.8" stroke="#18a018" stroke-width="1.2"/>
<line x1="1467.8" y1="331.5" x2="1467.8" y2="554.8" stroke="#e01010" stroke-width="1.3"/>
<line x1="1112.8" y1="588.3" x2="1112.8" y2="893" stroke="#18a018" stroke-width="1.4"/>
<line x1="1467.8" y1="588.3" x2="1467.8" y2="895" stroke="#f00000" stroke-width="1.6"/>
<path d="M1111.3 725l12 12.5h-8.2v15.5h-7.6v-15.5h-8.2z" fill="#009a00"/>
<path d="M1463.4 595h7.4v16h7.4l-11.1 12.6l-11.1-12.6h7.4z" fill="#ff0000"/>
<line x1="1856.5" y1="134.5" x2="1856.5" y2="186" stroke="#fff" stroke-width="1.4"/>
<path d="M1856.5 139.1h10.5 M1856.5 160.5h10.5 M1856.5 181.7h10.5 M1856.5 148.9h4.5 M1856.5 171.7h4.5" stroke="#fff" stroke-width="1.2" fill="none"/>
<text x="1915.3" y="167.3" font-family="Liberation Sans, sans-serif" font-size="16" fill="#fff" text-anchor="end">0</text>
<line x1="1856.5" y1="219.7" x2="1856.5" y2="298.2" stroke="#fff" stroke-width="1.4"/>
<path d="M1856.5 239.8h10.5 M1856.5 259.5h10.5 M1856.5 279.6h10.5 M1856.5 229.7h4.5 M1856.5 249.7h4.5 M1856.5 269.6h4.5 M1856.5 289.5h4.5" stroke="#fff" stroke-width="1.2" fill="none"/>
<text x="1915.3" y="246.2" font-family="Liberation Sans, sans-serif" font-size="16" fill="#fff" text-anchor="end">1000</text>
<text x="1915.3" y="266.8" font-family="Liberation Sans, sans-serif" font-size="16" fill="#fff" text-anchor="end">0</text>
<text x="1915.3" y="285.9" font-family="Liberation Sans, sans-serif" font-size="16" fill="#fff" text-anchor="end">-1000</text>
<line x1="1856.5" y1="331.5" x2="1856.5" y2="554.8" stroke="#fff" stroke-width="1.4"/>
<path d="M1856.5 546.5h10.5 M1856.5 528.4h10.5 M1856.5 510.3h10.5 M1856.5 492.2h10.5 M1856.5 474.1h10.5 M1856.5 456.1h10.5 M1856.5 438.0h10.5 M1856.5 419.9h10.5 M1856.5 401.8h10.5 M1856.5 383.7h10.5 M1856.5 365.7h10.5 M1856.5 347.6h10.5 M1856.5 537.4h4.5 M1856.5 519.3h4.5 M1856.5 501.3h4.5 M1856.5 483.2h4.5 M1856.5 465.1h4.5 M1856.5 447.0h4.5 M1856.5 428.9h4.5 M1856.5 410.9h4.5 M1856.5 392.8h4.5 M1856.5 374.7h4.5 M1856.5 356.6h4.5 M1856.5 338.5h4.5" stroke="#fff" stroke-width="1.2" fill="none"/>
<text x="1915.3" y="552.6" font-family="Liberation Sans, sans-serif" font-size="16" fill="#fff" text-anchor="end">-70</text>
<text x="1915.3" y="534.5" font-family="Liberation Sans, sans-serif" font-size="16" fill="#fff" text-anchor="end">-60</text>
<text x="1915.3" y="516.4" font-family="Liberation Sans, sans-serif" font-size="16" fill="#fff" text-anchor="end">-50</text>
<text x="1915.3" y="498.4" font-family="Liberation Sans, sans-serif" font-size="16" fill="#fff" text-anchor="end">-40</text>
<text x="1915.3" y="480.3" font-family="Liberation Sans, sans-serif" font-size="16" fill="#fff" text-anchor="end">-30</text>
<text x="1915.3" y="462.2" font-family="Liberation Sans, sans-serif" font-size="16" fill="#fff" text-anchor="end">-20</text>
<text x="1915.3" y="444.1" font-family="Liberation Sans, sans-serif" font-size="16" fill="#fff" text-anchor="end">-10</text>
<text x="1915.3" y="426.0" font-family="Liberation Sans, sans-serif" font-size="16" fill="#fff" text-anchor="end">0</text>
<text x="1915.3" y="408.0" font-family="Liberation Sans, sans-serif" font-size="16" fill="#fff" text-anchor="end">10</text>
<text x="1915.3" y="389.9" font-family="Liberation Sans, sans-serif" font-size="16" fill="#fff" text-anchor="end">20</text>
<text x="1915.3" y="371.8" font-family="Liberation Sans, sans-serif" font-size="16" fill="#fff" text-anchor="end">30</text>
<text x="1915.3" y="353.7" font-family="Liberation Sans, sans-serif" font-size="16" fill="#fff" text-anchor="end">40</text>
<line x1="1856.5" y1="588.3" x2="1856.5" y2="898" stroke="#fff" stroke-width="1.4"/>
<path d="M1856.5 872.1h10.5 M1856.5 851.3h10.5 M1856.5 830.6h10.5 M1856.5 809.9h10.5 M1856.5 789.2h10.5 M1856.5 768.5h10.5 M1856.5 747.7h10.5 M1856.5 727.0h10.5 M1856.5 706.3h10.5 M1856.5 685.6h10.5 M1856.5 664.9h10.5 M1856.5 644.1h10.5 M1856.5 623.4h10.5 M1856.5 602.7h10.5 M1856.5 888.6h4.5 M1856.5 884.5h4.5 M1856.5 880.3h4.5 M1856.5 876.2h4.5 M1856.5 867.9h4.5 M1856.5 863.8h4.5 M1856.5 859.6h4.5 M1856.5 855.5h4.5 M1856.5 847.2h4.5 M1856.5 843.1h4.5 M1856.5 838.9h4.5 M1856.5 834.8h4.5 M1856.5 826.5h4.5 M1856.5 822.3h4.5 M1856.5 818.2h4.5 M1856.5 814.0h4.5 M1856.5 805.8h4.5 M1856.5 801.6h4.5 M1856.5 797.5h4.5 M1856.5 793.3h4.5 M1856.5 785.0h4.5 M1856.5 780.9h4.5 M1856.5 776.7h4.5 M1856.5 772.6h4.5 M1856.5 764.3h4.5 M1856.5 760.2h4.5 M1856.5 756.0h4.5 M1856.5 751.9h4.5 M1856.5 743.6h4.5 M1856.5 739.5h4.5 M1856.5 735.3h4.5 M1856.5 731.2h4.5 M1856.5 722.9h4.5 M1856.5 718.7h4.5 M1856.5 714.6h4.5 M1856.5 710.4h4.5 M1856.5 702.2h4.5 M1856.5 698.0h4.5 M1856.5 693.9h4.5 M1856.5 689.7h4.5 M1856.5 681.4h4.5 M1856.5 677.3h4.5 M1856.5 673.1h4.5 M1856.5 669.0h4.5 M1856.5 660.7h4.5 M1856.5 656.6h4.5 M1856.5 652.4h4.5 M1856.5 648.3h4.5 M1856.5 640.0h4.5 M1856.5 635.9h4.5 M1856.5 631.7h4.5 M1856.5 627.6h4.5 M1856.5 619.3h4.5 M1856.5 615.1h4.5 M1856.5 611.0h4.5 M1856.5 606.8h4.5 M1856.5 598.6h4.5 M1856.5 594.4h4.5 M1856.5 590.3h4.5" stroke="#fff" stroke-width="1.2" fill="none"/>
<text x="1915.3" y="879.3" font-family="Liberation Sans, sans-serif" font-size="16" fill="#fff" text-anchor="end">3700</text>
<text x="1915.3" y="858.5" font-family="Liberation Sans, sans-serif" font-size="16" fill="#fff" text-anchor="end">3750</text>
<text x="1915.3" y="837.8" font-family="Liberation Sans, sans-serif" font-size="16" fill="#fff" text-anchor="end">3800</text>
<text x="1915.3" y="817.1" font-family="Liberation Sans, sans-serif" font-size="16" fill="#fff" text-anchor="end">3850</text>
<text x="1915.3" y="796.4" font-family="Liberation Sans, sans-serif" font-size="16" fill="#fff" text-anchor="end">3900</text>
<text x="1915.3" y="775.7" font-family="Liberation Sans, sans-serif" font-size="16" fill="#fff" text-anchor="end">3950</text>
<text x="1915.3" y="754.9" font-family="Liberation Sans, sans-serif" font-size="16" fill="#fff" text-anchor="end">4000</text>
<text x="1915.3" y="734.2" font-family="Liberation Sans, sans-serif" font-size="16" fill="#fff" text-anchor="end">4050</text>
<text x="1915.3" y="713.5" font-family="Liberation Sans, sans-serif" font-size="16" fill="#fff" text-anchor="end">4100</text>
<text x="1915.3" y="692.8" font-family="Liberation Sans, sans-serif" font-size="16" fill="#fff" text-anchor="end">4150</text>
<text x="1915.3" y="672.1" font-family="Liberation Sans, sans-serif" font-size="16" fill="#fff" text-anchor="end">4200</text>
<text x="1915.3" y="651.3" font-family="Liberation Sans, sans-serif" font-size="16" fill="#fff" text-anchor="end">4250</text>
<text x="1915.3" y="630.6" font-family="Liberation Sans, sans-serif" font-size="16" fill="#fff" text-anchor="end">4300</text>
<text x="1915.3" y="609.9" font-family="Liberation Sans, sans-serif" font-size="16" fill="#fff" text-anchor="end">4350</text>
<rect x="1861.8" y="668.3" width="60" height="20.4" fill="#000" stroke="#fff" stroke-width="1.3"/>
<text x="1864" y="684" font-family="Liberation Sans, sans-serif" font-size="14.4" fill="#e60000">4165.520</text>
<line x1="37.5" y1="901.9" x2="1857.5" y2="901.9" stroke="#fff" stroke-width="1.3"/>
<line x1="37.5" y1="921.9" x2="1857.5" y2="921.9" stroke="#fff" stroke-width="1.5"/>
<text x="50.2" y="917.3" font-family="Liberation Sans, sans-serif" font-size="16" fill="#fff">7</text>
<text x="94.6" y="917.3" font-family="Liberation Sans, sans-serif" font-size="16" fill="#fff">8</text>
<line x1="137.2" y1="901.3" x2="137.2" y2="921.8" stroke="#fff" stroke-width="1.4"/>
<text x="138.9" y="917.3" font-family="Liberation Sans, sans-serif" font-size="16" fill="#fff">11</text>
<text x="183.3" y="917.3" font-family="Liberation Sans, sans-serif" font-size="16" fill="#fff">12</text>
<text x="227.7" y="917.3" font-family="Liberation Sans, sans-serif" font-size="16" fill="#fff">13</text>
<text x="272.0" y="917.3" font-family="Liberation Sans, sans-serif" font-size="16" fill="#fff">14</text>
<text x="316.4" y="917.3" font-family="Liberation Sans, sans-serif" font-size="16" fill="#fff">15</text>
<line x1="359.1" y1="901.3" x2="359.1" y2="921.8" stroke="#fff" stroke-width="1.4"/>
<text x="360.8" y="917.3" font-family="Liberation Sans, sans-serif" font-size="16" fill="#fff">18</text>
<text x="405.1" y="917.3" font-family="Liberation Sans, sans-serif" font-size="16" fill="#fff">19</text>
<text x="449.5" y="917.3" font-family="Liberation Sans, sans-serif" font-size="16" fill="#fff">20</text>
<text x="493.9" y="917.3" font-family="Liberation Sans, sans-serif" font-size="16" fill="#fff">21</text>
<text x="538.2" y="917.3" font-family="Liberation Sans, sans-serif" font-size="16" fill="#fff">22</text>
<line x1="580.9" y1="901.3" x2="580.9" y2="921.8" stroke="#fff" stroke-width="1.4"/>
<text x="582.6" y="917.3" font-family="Liberation Sans, sans-serif" font-size="16" fill="#fff">25</text>
<text x="627.0" y="917.3" font-family="Liberation Sans, sans-serif" font-size="16" fill="#fff">26</text>
<text x="671.3" y="917.3" font-family="Liberation Sans, sans-serif" font-size="16" fill="#fff">27</text>
<text x="715.7" y="917.3" font-family="Liberation Sans, sans-serif" font-size="16" fill="#fff">28</text>
<text x="760.1" y="917.3" font-family="Liberation Sans, sans-serif" font-size="16" fill="#fff">29</text>
<line x1="802.7" y1="901.3" x2="802.7" y2="941.3" stroke="#fff" stroke-width="1.4"/>
<text x="804.4" y="917.3" font-family="Liberation Sans, sans-serif" font-size="16" fill="#fff">1</text>
<text x="848.8" y="917.3" font-family="Liberation Sans, sans-serif" font-size="16" fill="#fff">2</text>
<text x="893.2" y="917.3" font-family="Liberation Sans, sans-serif" font-size="16" fill="#fff">3</text>
<text x="937.5" y="917.3" font-family="Liberation Sans, sans-serif" font-size="16" fill="#fff">4</text>
<text x="981.9" y="917.3" font-family="Liberation Sans, sans-serif" font-size="16" fill="#fff">5</text>
<line x1="1024.6" y1="901.3" x2="1024.6" y2="921.8" stroke="#fff" stroke-width="1.4"/>
<text x="1026.3" y="917.3" font-family="Liberation Sans, sans-serif" font-size="16" fill="#fff">8</text>
<text x="1070.6" y="917.3" font-family="Liberation Sans, sans-serif" font-size="16" fill="#fff">9</text>
<text x="1115.0" y="917.3" font-family="Liberation Sans, sans-serif" font-size="16" fill="#fff">10</text>
<text x="1159.4" y="917.3" font-family="Liberation Sans, sans-serif" font-size="16" fill="#fff">11</text>
<text x="1203.7" y="917.3" font-family="Liberation Sans, sans-serif" font-size="16" fill="#fff">12</text>
<line x1="1246.4" y1="901.3" x2="1246.4" y2="921.8" stroke="#fff" stroke-width="1.4"/>
<text x="1248.1" y="917.3" font-family="Liberation Sans, sans-serif" font-size="16" fill="#fff">15</text>
<text x="1292.4" y="917.3" font-family="Liberation Sans, sans-serif" font-size="16" fill="#fff">16</text>
<text x="1336.8" y="917.3" font-family="Liberation Sans, sans-serif" font-size="16" fill="#fff">17</text>
<text x="1381.2" y="917.3" font-family="Liberation Sans, sans-serif" font-size="16" fill="#fff">18</text>
<text x="1425.5" y="917.3" font-family="Liberation Sans, sans-serif" font-size="16" fill="#fff">19</text>
<line x1="1468.2" y1="901.3" x2="1468.2" y2="921.8" stroke="#fff" stroke-width="1.4"/>
<text x="1469.9" y="917.3" font-family="Liberation Sans, sans-serif" font-size="16" fill="#fff">22</text>
<text x="1535.6" y="917.3" font-family="Liberation Sans, sans-serif" font-size="16" fill="#fff">23</text>
<text x="1669.6" y="917.3" font-family="Liberation Sans, sans-serif" font-size="16" fill="#fff">24</text>
<text x="1802.6" y="917.3" font-family="Liberation Sans, sans-serif" font-size="16" fill="#fff">25</text>
<text x="805" y="937" textLength="47.6" lengthAdjust="spacingAndGlyphs" font-family="Liberation Sans, sans-serif" font-size="16" fill="#fff">August</text>
<defs>
<linearGradient id="gP" x1="0" y1="0" x2="1" y2="1"><stop offset="0" stop-color="#54280f"/><stop offset=".5" stop-color="#b0561a"/><stop offset="1" stop-color="#5a1006"/></linearGradient>
<linearGradient id="gGrip" x1="0" y1="0" x2="1" y2="0"><stop offset="0" stop-color="#f4f4f4"/><stop offset=".5" stop-color="#d6d6d6"/><stop offset="1" stop-color="#b8b8b8"/></linearGradient>
<linearGradient id="gGripH" x1="0" y1="0" x2="0" y2="1"><stop offset="0" stop-color="#f4f4f4"/><stop offset=".5" stop-color="#d6d6d6"/><stop offset="1" stop-color="#b8b8b8"/></linearGradient>
<linearGradient id="gBlueDoc" x1="0" y1="0" x2="1" y2="1"><stop offset="0" stop-color="#c4e2f4"/><stop offset="1" stop-color="#86c0e4"/></linearGradient>
<linearGradient id="gFold" x1="0" y1="0" x2="0" y2="1"><stop offset="0" stop-color="#dce6f2"/><stop offset="1" stop-color="#8eaed0"/></linearGradient>
<linearGradient id="gPink" x1="0" y1="0" x2="0" y2="1"><stop offset="0" stop-color="#f6b8bc"/><stop offset="1" stop-color="#f07a84"/></linearGradient>
<linearGradient id="gGrey" x1="0" y1="0" x2="0" y2="1"><stop offset="0" stop-color="#c4c4c4"/><stop offset="1" stop-color="#888"/></linearGradient>
<linearGradient id="gLite" x1="0" y1="0" x2="0" y2="1"><stop offset="0" stop-color="#ffffff"/><stop offset="1" stop-color="#d4d4d4"/></linearGradient>
<radialGradient id="gLens" cx=".4" cy=".35" r=".7"><stop offset="0" stop-color="#e8f4ff"/><stop offset="1" stop-color="#7ab0e0"/></radialGradient>
<linearGradient id="gGold" x1="0" y1="0" x2="0" y2="1"><stop offset="0" stop-color="#fff0a0"/><stop offset="1" stop-color="#e0b020"/></linearGradient>
<linearGradient id="gUndo" x1="0" y1="0" x2="0" y2="1"><stop offset="0" stop-color="#6cae6c"/><stop offset="1" stop-color="#3a7a3e"/></linearGradient>
<linearGradient id="gArrow" x1="0" y1="0" x2="0" y2="1"><stop offset="0" stop-color="#6cc0f0"/><stop offset="1" stop-color="#1a84c8"/></linearGradient>
<linearGradient id="gBtn" x1="0" y1="0" x2="1" y2="1"><stop offset="0" stop-color="#fafafa"/><stop offset="1" stop-color="#d4d4d4"/></linearGradient>
<linearGradient id="gShape" x1="0" y1="0" x2="1" y2="1"><stop offset="0" stop-color="#ffffff"/><stop offset="1" stop-color="#c8ccd0"/></linearGradient>
<linearGradient id="gWin" x1="0" y1="0" x2="1" y2="1"><stop offset="0" stop-color="#7ad8f8"/><stop offset="1" stop-color="#1a9ae8"/></linearGradient>
<linearGradient id="gMS" x1="0" y1="0" x2="0" y2="1"><stop offset="0" stop-color="#4a4a4a"/><stop offset=".5" stop-color="#111"/><stop offset="1" stop-color="#000"/></linearGradient>
<linearGradient id="gFolderY" x1="0" y1="0" x2="0" y2="1"><stop offset="0" stop-color="#ffd858"/><stop offset="1" stop-color="#f4b418"/></linearGradient>
<linearGradient id="gEdge" x1="0" y1="0" x2="1" y2="1"><stop offset="0" stop-color="#35c0a0"/><stop offset=".5" stop-color="#1a8ad8"/><stop offset="1" stop-color="#0c58a8"/></linearGradient>
<linearGradient id="gChat" x1="0" y1="0" x2="1" y2="1"><stop offset="0" stop-color="#8a84e0"/><stop offset="1" stop-color="#5a52c0"/></linearGradient>
<radialGradient id="gSun" cx=".4" cy=".35" r=".75"><stop offset="0" stop-color="#ffc020"/><stop offset="1" stop-color="#f08000"/></radialGradient>
</defs>
<rect x="5" y="74" width="25" height="24.6" fill="url(#gP)"/>
<path d="M5 92c6-8 12-3 25-12M5 84c8 6 16-6 25 4" stroke="#e8a060" stroke-width=".9" fill="none" opacity=".6"/>
<text x="17.6" y="91.4" text-anchor="middle" font-family="Liberation Sans,sans-serif" font-weight="bold" font-size="14" fill="#fff">P</text>
<line x1="43" y1="66" x2="43" y2="104" stroke="#b8b8b8" stroke-width="1"/><line x1="44" y1="66" x2="44" y2="104" stroke="#fcfcfc" stroke-width="1"/>
<rect x="50.5" y="66.5" width="9" height="37.5" fill="url(#gGrip)"/>
<rect x="53.6" y="85.0" width="2.6" height="2.6" fill="#555"/>
<line x1="60.1" y1="66.5" x2="60.1" y2="104" stroke="#9a9a9a" stroke-width="1"/>
<path d="M68.2 75.7h12.6l5.8 5.8v14.8h-18.4z" fill="#fbfbfb" stroke="#808080" stroke-width="1.4" stroke-linejoin="round"/>
<path d="M71 78.6h8.4v4.4h4.4v10.6h-12.8z" fill="url(#gBlueDoc)"/>
<path d="M80.8 75.7v5.8h5.8" fill="#f0f0f0" stroke="#808080" stroke-width="1.1" stroke-linejoin="round"/>
<path d="M101.8 93.6v-14.4q0-1 1-1h5.6l1.8 2.2h8.6q1 0 1 1v5" fill="#fafafa" stroke="#8a8a8a" stroke-width="1.3" stroke-linejoin="round"/>
<path d="M101.9 94.3l5.2-8.2h16.3l-5 8.2z" fill="url(#gFold)" stroke="#8a8a8a" stroke-width="1.2" stroke-linejoin="round"/>
<path d="M134.7 75.8h18.8l2 2v17.2q0 1.2-1.2 1.2h-18.4q-1.2 0-1.2-1.2z" fill="#f6f6f6" stroke="#858585" stroke-width="1.4" stroke-linejoin="round"/>
<rect x="138.8" y="76.5" width="12.6" height="9.6" fill="url(#gPink)"/>
<rect x="139.2" y="89" width="11.8" height="7" fill="url(#gGrey)"/><rect x="147.4" y="90.4" width="2.2" height="4.4" fill="#f0f0f0"/>
<rect x="152.6" y="76.6" width="2" height="2.4" fill="#777"/>
<line x1="165.4" y1="72.8" x2="165.4" y2="99.8" stroke="#7c7c7c" stroke-width="1.2"/>
<rect x="175.6" y="77" width="21.6" height="8.6" rx="1.5" fill="url(#gLite)" stroke="#8a8a8a" stroke-width="1.3"/>
<rect x="193" y="79" width="2" height="2" fill="#5ab85a"/>
<rect x="179.6" y="84" width="13.4" height="12.6" fill="#f4faf2" stroke="#858585" stroke-width="1.3"/>
<path d="M181.6 87h9.4M181.6 89.6h6M181.6 92h4M181.6 94.4h9.4" stroke="#707070" stroke-width="1"/>
<rect x="209.4" y="75.6" width="13.6" height="17.4" fill="#e8e8e8" stroke="#b0b0b0" stroke-width="1"/>
<line x1="223.6" y1="88" x2="229.6" y2="95.6" stroke="#404040" stroke-width="3" stroke-linecap="round"/>
<circle cx="219.8" cy="83.4" r="5.6" fill="url(#gLens)" stroke="#4a4a4a" stroke-width="2.2"/>
<line x1="240.4" y1="72.8" x2="240.4" y2="99.8" stroke="#7c7c7c" stroke-width="1.2"/>
<path d="M256.2 76.4l7.6 13.6M267 76.4l-7.6 13.6" stroke="#7a7a7a" stroke-width="2.8" stroke-linecap="round"/>
<path d="M256 76l2.4 6M267.2 76l-2.4 6" stroke="#909090" stroke-width="3.4" stroke-linecap="round"/>
<circle cx="256" cy="92.6" r="2.9" fill="none" stroke="#7a7a7a" stroke-width="1.9"/><circle cx="266.4" cy="92.6" r="2.9" fill="none" stroke="#7a7a7a" stroke-width="1.9"/>
<path d="M284.6 75.8h8.2l3.4 3.4v11.6h-11.6z" fill="#f4f4f4" stroke="#808080" stroke-width="1.3" stroke-linejoin="round"/>
<path d="M286.6 80.4h7.6 M286.6 82.6h7.6 M286.6 84.8h7.6 M286.6 87.0h7.6" stroke="#b4b4b4" stroke-width="1"/>
<path d="M294.8 81.8h7.6l3.4 3.4v11.6h-11z" fill="#f4f4f4" stroke="#808080" stroke-width="1.3" stroke-linejoin="round"/>
<path d="M296.8 86.4h7 M296.8 88.6h7 M296.8 90.8h7 M296.8 93.0h7" stroke="#b4b4b4" stroke-width="1"/>
<rect x="319.6" y="78.4" width="20" height="18.2" rx="1.2" fill="#d8d4c8" stroke="#858585" stroke-width="1.4"/>
<rect x="322.6" y="81.6" width="14" height="13" fill="#fcfcfc"/>
<path d="M324.6 84.6h10M324.6 87h6M324.6 89.4h4M324.6 91.8h10" stroke="#b0b0b0" stroke-width="1"/>
<rect x="325" y="74" width="9.6" height="7.6" rx="2" fill="url(#gGold)" stroke="#c89a18" stroke-width="1.1"/><rect x="328" y="75.8" width="3.8" height="1.6" fill="#8a7a40"/>
<line x1="349.2" y1="72.8" x2="349.2" y2="99.8" stroke="#7c7c7c" stroke-width="1.2"/>
<path d="M361 82.6l9.6-5.4v3.8c7 .4 9.6 4.6 9.2 9-.4 3.6-3.4 6-8 6.6 3-1.6 4.4-3.4 3.6-5.6-.6-1.8-2.2-2.6-4.8-2.8v3.8z" fill="url(#gUndo)"/>
<line x1="390.4" y1="72.8" x2="390.4" y2="99.8" stroke="#7c7c7c" stroke-width="1.2"/>
<circle cx="411" cy="86.3" r="8" fill="#f4eef6" stroke="#3a96c8" stroke-width="2.4"/>
<path d="M411 73.6v25.4M398.4 86.3h25.4" stroke="#3a96c8" stroke-width="2.2"/>
<rect x="432.8" y="76" width="12" height="11.4" fill="none" stroke="#8a8a8a" stroke-width="1.3" stroke-dasharray="1.6,1.4"/>
<line x1="449.6" y1="90" x2="455.8" y2="97" stroke="#404040" stroke-width="3" stroke-linecap="round"/>
<circle cx="445.6" cy="85.4" r="5.4" fill="url(#gLens)" stroke="#4a4a4a" stroke-width="2.2"/>
<line x1="465.4" y1="72.8" x2="465.4" y2="99.8" stroke="#7c7c7c" stroke-width="1.2"/>
<rect x="470.6" y="73" width="218.6" height="26.8" rx="2" fill="#fff" stroke="#7a7a7a" stroke-width="1.2"/>
<rect x="476.4" y="79" width="15.8" height="15.6" fill="#1a6ac8" stroke="#0c3c8a" stroke-width="1"/>
<text x="484.6" y="92" text-anchor="middle" font-family="Liberation Serif,serif" font-style="italic" font-weight="bold" font-size="14" fill="#fff">f</text>
<text x="496.4" y="91.4" font-family="Liberation Sans,sans-serif" font-size="15.6" fill="#111" textLength="41" lengthAdjust="spacingAndGlyphs">Smash</text>
<path d="M673.4 84.6l5.2 5 5.2-5" fill="none" stroke="#505050" stroke-width="1.3"/>
<line x1="692.2" y1="72.8" x2="692.2" y2="99.8" stroke="#7c7c7c" stroke-width="1.2"/>
<line x1="694.2" y1="72.8" x2="694.2" y2="99.8" stroke="#fcfcfc" stroke-width="1"/>
<ellipse cx="713.6" cy="88.8" rx="6.8" ry="7.4" fill="#f8dcd8" stroke="#707070" stroke-width="1"/>
<circle cx="711" cy="87" r="1" fill="#3a7ad0"/><circle cx="716.2" cy="87" r="1" fill="#3a7ad0"/><path d="M713.6 88v3.4M712 93h3.2" stroke="#805050" stroke-width=".8"/>
<path d="M706.4 83.4q0-8.6 7.2-8.6t7.2 8.6z" fill="#4a4a4a"/><ellipse cx="713.6" cy="83.6" rx="11" ry="2.4" fill="#3a3a3a"/><rect x="706.6" y="80.6" width="14" height="2.2" fill="#111"/>
<text x="738" y="93.4" font-family="Liberation Serif,serif" font-style="italic" font-size="27" fill="#d8508a" stroke="#d8508a" stroke-width=".45">f</text>
<path d="M740 82.6h10.6" stroke="#d8508a" stroke-width="1.3"/>
<text x="747.2" y="96" font-family="Liberation Serif,serif" font-weight="bold" font-size="8.6" fill="#d8508a">(x)</text>
<text x="781.2" y="95.4" text-anchor="middle" font-family="Liberation Serif,serif" font-size="29" fill="#2a8a2a" stroke="#2a8a2a" stroke-width=".5">$</text>
<path d="M806.6 79h6l2.6 4v10.4h-10.6v-8z" fill="#7c7c7c"/><path d="M823.8 79h-6l-2.6 4v10.4h10.6v-8z" fill="#7c7c7c"/>
<rect x="812.4" y="82" width="6" height="6.6" fill="#5a5a5a"/>
<rect x="807.4" y="75.6" width="4.4" height="4" fill="#e8c020"/><rect x="818.6" y="75.6" width="4.4" height="4" fill="#e8c020"/>
<rect x="804.6" y="92.6" width="8.8" height="3" fill="#e8c020"/><rect x="817" y="92.6" width="8.8" height="3" fill="#e8c020"/>
<rect x="813" y="85" width="1.2" height="1.2" fill="#e8c020"/><rect x="815" y="85" width="1.2" height="1.2" fill="#e8c020"/><rect x="817" y="85" width="1.2" height="1.2" fill="#e8c020"/>
<path d="M836 82.2h1.4v7.6h-1.4zM838.6 82.2h1.6v7.6h-1.6zM841.4 82.2h2v7.6h-2zM844.6 82.2h6.6v-3l10 6.8-10 6.8v-3h-6.6z" fill="url(#gArrow)"/>
<path d="M879.4 74.8h6.4v5h3.6l-6.8 7.4-6.8-7.4h3.6z" fill="url(#gArrow)"/>
<rect x="872" y="86.6" width="21.4" height="9.8" rx="1.6" fill="url(#gLite)" stroke="#8a8a8a" stroke-width="1.3"/>
<rect x="874.4" y="92" width="16.4" height="1.8" fill="#8a8a8a"/><rect x="889" y="88.6" width="2" height="2" fill="#6ac06a"/>
<rect x="910.6" y="75" width="6" height="14" rx="1.4" fill="#6a7aa8"/><rect x="910.6" y="78.6" width="6" height="1.4" fill="#4a5a88"/>
<path d="M909 84.6h11c4 1 6 4 5.6 8.4h-4c0-3-1.4-4.6-4-5h-8.6z" fill="#2a8ad8"/>
<path d="M907 91.2h11v2h-11zM905.4 96h20" stroke="#1a7ac8" stroke-width="2" fill="#1a5aa8"/>
<rect x="939.4" y="74.8" width="21" height="23.4" fill="#f6fafc" stroke="#4a6a8a" stroke-width="1.5"/>
<rect x="941.8" y="77.6" width="3" height="3" fill="#a0b8c8"/><path d="M946.4 78h12M946.4 80.4h12M942 85.4h8M942 88h6M942 92h10M942 94.6h10" stroke="#b0c4d0" stroke-width="1"/>
<line x1="956.6" y1="92" x2="961.6" y2="97.4" stroke="#404040" stroke-width="2.8" stroke-linecap="round"/>
<circle cx="953.2" cy="87.6" r="4.6" fill="url(#gLens)" stroke="#4a4a4a" stroke-width="2"/>
<path d="M974 79.6l1.2 11.6 2.8-2.2 2.2 4 2.2-1.2-2.2-4 3.4-.8z" fill="#e8e8e8" stroke="#707070" stroke-width="1.2" stroke-linejoin="round"/>
<text x="990.4" y="95" text-anchor="middle" font-family="Liberation Sans,sans-serif" font-weight="bold" font-size="24" fill="#2a9a2a">?</text>
<line x1="1009.4" y1="66" x2="1009.4" y2="104" stroke="#9a9a9a" stroke-width="1"/>
<line x1="1010.4" y1="66" x2="1010.4" y2="104" stroke="#fcfcfc" stroke-width="1"/>
<rect x="1016.6" y="66.5" width="9" height="37.5" fill="url(#gGrip)"/>
<rect x="1019.7" y="85.0" width="2.6" height="2.6" fill="#555"/>
<line x1="1026.1999999999998" y1="66.5" x2="1026.1999999999998" y2="104" stroke="#9a9a9a" stroke-width="1"/>
<rect x="1031.8" y="74.6" width="15" height="12" rx="1" fill="#ececec" stroke="#858585" stroke-width="1"/>
<rect x="1032.6" y="75.39999999999999" width="13.4" height="2.2" fill="#c8c8c8"/>
<rect x="1035.4" y="79.6" width="15" height="12" rx="1" fill="#ececec" stroke="#858585" stroke-width="1"/>
<rect x="1036.2" y="80.39999999999999" width="13.4" height="2.2" fill="#c8c8c8"/>
<rect x="1039.6" y="85.4" width="15.4" height="12.6" rx="1" fill="#ececec" stroke="#858585" stroke-width="1.3"/>
<rect x="1040.3999999999999" y="86.2" width="13.8" height="2.2" fill="#c8c8c8"/>
<path d="M1041.1 95.5l3.9 -3.8l2.3 1.5l3.1 -3.8l2.3 2.5l2.3 -1.5" fill="none" stroke="#9a9a9a" stroke-width="1"/>
<rect x="1065.6" y="74.6" width="12" height="23.6" rx="1" fill="#ececec" stroke="#858585" stroke-width="1.3"/>
<rect x="1066.3999999999999" y="75.39999999999999" width="10.4" height="2.2" fill="#c8c8c8"/>
<path d="M1067.1 95.69999999999999l3.0 -7.1l1.8 2.8l2.4 -7.1l1.8 4.7l1.8 -2.8" fill="none" stroke="#9a9a9a" stroke-width="1"/>
<rect x="1077.6" y="74.6" width="12" height="23.6" rx="1" fill="#ececec" stroke="#858585" stroke-width="1.3"/>
<rect x="1078.3999999999999" y="75.39999999999999" width="10.4" height="2.2" fill="#c8c8c8"/>
<path d="M1079.1 95.69999999999999l3.0 -7.1l1.8 2.8l2.4 -7.1l1.8 4.7l1.8 -2.8" fill="none" stroke="#9a9a9a" stroke-width="1"/>
<rect x="1099.4" y="74.6" width="24" height="12" rx="1" fill="#ececec" stroke="#858585" stroke-width="1.3"/>
<rect x="1100.2" y="75.39999999999999" width="22.4" height="2.2" fill="#c8c8c8"/>
<path d="M1100.9 84.1l6.0 -3.6l3.6 1.4l4.8 -3.6l3.6 2.4l3.6 -1.4" fill="none" stroke="#9a9a9a" stroke-width="1"/>
<rect x="1099.4" y="86.4" width="24" height="12" rx="1" fill="#ececec" stroke="#858585" stroke-width="1.3"/>
<rect x="1100.2" y="87.2" width="22.4" height="2.2" fill="#c8c8c8"/>
<path d="M1100.9 95.9l6.0 -3.6l3.6 1.4l4.8 -3.6l3.6 2.4l3.6 -1.4" fill="none" stroke="#9a9a9a" stroke-width="1"/>
<rect x="1133" y="76.8" width="12" height="9.4" rx="1" fill="#ececec" stroke="#858585" stroke-width="1.3"/>
<rect x="1133.8" y="77.6" width="10.4" height="2.2" fill="#c8c8c8"/>
<path d="M1134.5 83.7l3.0 -2.8l1.8 1.1l2.4 -2.8l1.8 1.9l1.8 -1.1" fill="none" stroke="#9a9a9a" stroke-width="1"/>
<rect x="1145" y="76.8" width="12" height="9.4" rx="1" fill="#ececec" stroke="#858585" stroke-width="1.3"/>
<rect x="1145.8" y="77.6" width="10.4" height="2.2" fill="#c8c8c8"/>
<path d="M1146.5 83.7l3.0 -2.8l1.8 1.1l2.4 -2.8l1.8 1.9l1.8 -1.1" fill="none" stroke="#9a9a9a" stroke-width="1"/>
<rect x="1133" y="86.2" width="12" height="9.4" rx="1" fill="#ececec" stroke="#858585" stroke-width="1.3"/>
<rect x="1133.8" y="87.0" width="10.4" height="2.2" fill="#c8c8c8"/>
<path d="M1134.5 93.10000000000001l3.0 -2.8l1.8 1.1l2.4 -2.8l1.8 1.9l1.8 -1.1" fill="none" stroke="#9a9a9a" stroke-width="1"/>
<rect x="1145" y="86.2" width="12" height="9.4" rx="1" fill="#ececec" stroke="#858585" stroke-width="1.3"/>
<rect x="1145.8" y="87.0" width="10.4" height="2.2" fill="#c8c8c8"/>
<path d="M1146.5 93.10000000000001l3.0 -2.8l1.8 1.1l2.4 -2.8l1.8 1.9l1.8 -1.1" fill="none" stroke="#9a9a9a" stroke-width="1"/>
<rect x="1167" y="76.8" width="24" height="18.8" rx="1" fill="#ececec" stroke="#858585" stroke-width="1.3"/>
<path d="M1183.5 86.2L1186.6 86.2 M1182.2 89.4L1184.4 91.6 M1179.0 90.7L1179.0 93.8 M1175.8 89.4L1173.6 91.6 M1174.5 86.2L1171.4 86.2 M1175.8 83.0L1173.6 80.8 M1179.0 81.7L1179.0 78.6 M1182.2 83.0L1184.4 80.8" stroke="#3a3a3a" stroke-width="2.8"/>
<circle cx="1179" cy="86.2" r="4" fill="none" stroke="#3a3a3a" stroke-width="3"/>
<line x1="1204" y1="66" x2="1204" y2="104" stroke="#9a9a9a" stroke-width="1"/>
<line x1="1205" y1="66" x2="1205" y2="104" stroke="#fcfcfc" stroke-width="1"/><defs><linearGradient id="gTB" x1="0" y1="0" x2="0" y2="1"><stop offset="0" stop-color="#707070"/><stop offset=".45" stop-color="#3e3e3e"/><stop offset=".5" stop-color="#2a2a2a"/><stop offset="1" stop-color="#161616"/></linearGradient><linearGradient id="gMDI" x1="0" y1="0" x2="0" y2="1"><stop offset="0" stop-color="#fbfcfd"/><stop offset=".45" stop-color="#e4ecf2"/><stop offset="1" stop-color="#b0c8d6"/></linearGradient></defs>
<rect x="1826.4" y="5.6" width="89.4" height="20.2" rx="3" fill="url(#gTB)" stroke="#1c1c1c" stroke-width="1.2"/>
<path d="M1854.8 6.4v18.8M1886 6.4v18.8" stroke="#1a1a1a" stroke-width="1"/><path d="M1855.8 6.4v18.8M1887 6.4v18.8" stroke="#585858" stroke-width=".8" opacity=".7"/>
<rect x="1835" y="18.7" width="11" height="2.5" fill="#c4c4c4"/>
<rect x="1864.4" y="11" width="12" height="9.2" fill="none" stroke="#c0c0c0" stroke-width="1.9"/>
<path d="M1896.6 10.6l9 9M1905.6 10.6l-9 9" stroke="#c8c8c8" stroke-width="2.5"/>
<rect x="1919.2" y="0" width="1" height="1014" fill="#555"/>
<rect x="1852.6" y="44.4" width="63" height="15.4" rx="2.2" fill="url(#gMDI)" stroke="#a4bccc" stroke-width="1"/>
<path d="M1873.2 45v14.4M1895.2 45v14.4" stroke="#f4f8fa" stroke-width="1.4"/>
<rect x="1857.4" y="54" width="11" height="2.2" fill="#4a6478"/>
<path d="M1883.4 50v-3h8.4v6h-3" fill="none" stroke="#4a6478" stroke-width="1.8"/><rect x="1877.6" y="51.2" width="8.2" height="5.4" fill="none" stroke="#4a6478" stroke-width="1.8"/>
<path d="M1901.4 48l8.4 8M1909.8 48l-8.4 8" stroke="#4a6478" stroke-width="2"/>
<path d="M0 3.5h330q-190 3-330 14z" fill="#fff" opacity=".1"/>
<path d="M6.6 23.6v-4.2h1.6v4.2zM8.9 23.6v-7.6h1.6v7.6zM11.1 23.6v-11.4h1.5v11.4z" fill="#f08a20"/>
<rect x="0.5" y="112.2" width="34.5" height="7.4" fill="url(#gGripH)"/><rect x="15.2" y="114.60000000000001" width="2.6" height="2.6" fill="#555"/>
<defs><linearGradient id="gCur" x1="0" y1="0" x2="1" y2="1"><stop offset="0" stop-color="#ffffff"/><stop offset="1" stop-color="#9cc4ee"/></linearGradient></defs>
<rect x="-3" y="123.4" width="32.6" height="29.4" rx="3" fill="#e9e9e9" stroke="#cfe8ff" stroke-width="2.6"/><rect x="-3" y="122.6" width="33.6" height="31" rx="3.6" fill="none" stroke="#a8d6fc" stroke-width="1"/>
<path d="M6.2 129.6l14 6.9-3.500000000000001 3.4 4.800000000000001 6.6-4.5 3.2-4.800000000000001-6.5-3.7 1.3z" fill="url(#gCur)" stroke="#2a7ad0" stroke-width="1.6" stroke-linejoin="round"/>
<rect x="2.2" y="159.6" width="23.4" height="23.4" fill="url(#gBtn)"/>
<path d="M2.2 183.0v-23.4h23.4" fill="none" stroke="#fdfdfd" stroke-width="1"/><path d="M2.2 183.0h23.4v-23.4" fill="none" stroke="#bcbcbc" stroke-width="1"/>
<path d="M13.9 163.4v15.8M6 171.3h15.8" stroke="#4a4a4a" stroke-width="2"/>
<line x1="2" y1="190.4" x2="26" y2="190.4" stroke="#b4b4b4" stroke-width="1"/>
<rect x="2.2" y="199.4" width="23.4" height="23.4" fill="url(#gBtn)"/>
<path d="M2.2 222.8v-23.4h23.4" fill="none" stroke="#fdfdfd" stroke-width="1"/><path d="M2.2 222.8h23.4v-23.4" fill="none" stroke="#bcbcbc" stroke-width="1"/>
<path d="M5 202.6l17.6 17.4" stroke="#4a4a4a" stroke-width="1.8"/>
<rect x="2.2" y="232" width="23.4" height="23.4" fill="url(#gBtn)"/>
<path d="M2.2 255.4v-23.4h23.4" fill="none" stroke="#fdfdfd" stroke-width="1"/><path d="M2.2 255.4h23.4v-23.4" fill="none" stroke="#bcbcbc" stroke-width="1"/>
<path d="M5.4 243.8h17" stroke="#4a4a4a" stroke-width="2.2"/>
<rect x="2.2" y="264.6" width="23.4" height="23.4" fill="url(#gBtn)"/>
<path d="M2.2 288.0v-23.4h23.4" fill="none" stroke="#fdfdfd" stroke-width="1"/><path d="M2.2 288.0h23.4v-23.4" fill="none" stroke="#bcbcbc" stroke-width="1"/>
<path d="M13.9 268.2v16.6" stroke="#4a4a4a" stroke-width="2.2"/>
<rect x="2.2" y="297.2" width="23.4" height="23.4" fill="url(#gBtn)"/>
<path d="M2.2 320.59999999999997v-23.4h23.4" fill="none" stroke="#fdfdfd" stroke-width="1"/><path d="M2.2 320.59999999999997h23.4v-23.4" fill="none" stroke="#bcbcbc" stroke-width="1"/>
<path d="M4.6 299.6l18 18.6" stroke="#4a4a4a" stroke-width="1.6"/>
<text x="16.4" y="306.6" font-family="Liberation Sans,sans-serif" font-size="8.6" fill="#333">L</text><text x="4.4" y="318.6" font-family="Liberation Sans,sans-serif" font-size="8.6" fill="#333">S</text>
<line x1="0" y1="568.6" x2="35.5" y2="568.6" stroke="#a4a4a4" stroke-width="1"/><line x1="0" y1="569.6" x2="35.5" y2="569.6" stroke="#fcfcfc" stroke-width="1"/>
<rect x="0.5" y="340.8" width="34.5" height="7.4" fill="url(#gGripH)"/><rect x="15.2" y="343.2" width="2.6" height="2.6" fill="#555"/>
<rect x="0.4" y="352.4" width="13.6" height="30.4" fill="#f4f4f4" stroke="#c0c0c0" stroke-width="1"/>
<rect x="15.4" y="352.4" width="13.6" height="30.4" fill="#f4f4f4" stroke="#c0c0c0" stroke-width="1"/>
<path d="M3.6 367l3.8-3.4v6.8z" fill="#222"/><path d="M24.2 367l-3.8-3.4v6.8z" fill="#222"/>
<line x1="2" y1="387.4" x2="26" y2="387.4" stroke="#b4b4b4" stroke-width="1"/>
<rect x="2.2" y="395.6" width="23.4" height="23.4" fill="url(#gBtn)"/>
<path d="M2.2 419.0v-23.4h23.4" fill="none" stroke="#fdfdfd" stroke-width="1"/><path d="M2.2 419.0h23.4v-23.4" fill="none" stroke="#bcbcbc" stroke-width="1"/>
<text x="13.9" y="411.4" text-anchor="middle" font-family="Liberation Sans,sans-serif" font-size="12.4" fill="#333" letter-spacing="-0.6">abc</text>
<rect x="2.2" y="428.2" width="23.4" height="23.4" fill="url(#gBtn)"/>
<path d="M2.2 436h23.4M2.2 443.8h23.4M10 428.2v23.4M17.8 428.2v23.4" stroke="#7c7c7c" stroke-width="1.5"/><path d="M2.2 428.2h23.4v23.4h-23.4z" fill="none" stroke="#d8d8d8" stroke-width="1"/>
<line x1="2" y1="459.2" x2="26" y2="459.2" stroke="#b4b4b4" stroke-width="1"/>
<ellipse cx="13.6" cy="479.2" rx="11" ry="7.2" fill="url(#gShape)" stroke="#555" stroke-width="1.3"/>
<rect x="3" y="505.8" width="21.4" height="14.4" fill="url(#gShape)" stroke="#555" stroke-width="1.3"/>
<path d="M13.6 537.4l10.6 14h-21.2z" fill="url(#gShape)" stroke="#555" stroke-width="1.3" stroke-linejoin="round"/>
<rect x="1394" y="954" width="249.4" height="4.2" fill="#8c8c8c"/>
<line x1="1667.7" y1="946.6" x2="1667.7" y2="966" stroke="#7a7a7a" stroke-width="1.2"/>
<line x1="1727.5" y1="946.6" x2="1727.5" y2="966" stroke="#7a7a7a" stroke-width="1.2"/>
<line x1="1840.5" y1="946.6" x2="1840.5" y2="966" stroke="#7a7a7a" stroke-width="1.2"/>
<path d="M1678.4 955.4a6.2 6.2 0 0 1 10.8-3.6" fill="none" stroke="#505050" stroke-width="2.6"/><path d="M1691.6 948.2v6.4h-6.4z" fill="#505050"/>
<path d="M1690.6 957a6.2 6.2 0 0 1-10.8 3.6" fill="none" stroke="#505050" stroke-width="2.6"/><path d="M1677.4 964.2v-6.4h6.4z" fill="#505050"/>
<rect x="1709.8" y="950.6" width="2" height="11" fill="#505050"/>
<path d="M1744.7 948.8l4 4.8h-2.8v5h2.8l-4 4.8-4-4.8h2.8v-5h-2.8z" fill="#505050"/>
<path d="M1770.8 947.2l3.4 3.8h-2.2v3.8h3.8v-2.2l3.8 3.4-3.8 3.4v-2.2h-3.8v3.8h2.2l-3.4 3.8-3.4-3.8h2.2v-3.8h-3.8v2.2l-3.8-3.4 3.8-3.4v2.2h3.8v-3.8h-2.2z" fill="#505050"/>
<circle cx="1797.2" cy="956" r="6.6" fill="#f4f4f4" stroke="#8a8a8a" stroke-width="1.4"/><rect x="1793.6" y="955" width="7.2" height="2" fill="#505050"/>
<circle cx="1823.3" cy="956" r="6.6" fill="#f4f4f4" stroke="#8a8a8a" stroke-width="1.4"/><path d="M1819.7 956h7.2M1823.3 952.4v7.2" stroke="#505050" stroke-width="2"/>
<path d="M1853.4 956l6.4-5v10z" fill="#b4b4b4"/><path d="M1887 956l-6.4-5v10z" fill="#b4b4b4"/>
<rect x="1901.8" y="949.4" width="13" height="13" fill="#f8f8f8" stroke="#707070" stroke-width="1.3"/><rect x="1901.8" y="949.4" width="13" height="2.4" fill="#707070"/>
<path d="M1904.2 954.6h1.4M1906.8 954.6h6M1904.2 957.2h1.4M1906.8 957.2h6M1904.2 959.8h1.4M1906.8 959.8h6" stroke="#606060" stroke-width="1.2"/>
<rect x="1858.2" y="904.6" width="60" height="37.6" fill="#eeeeee"/><path d="M1858.2 942.2v-37.6h60" fill="none" stroke="#c4c4c4" stroke-width="1"/>
<circle cx="1886.5" cy="920.9" r="9.8" fill="none" stroke="#f01010" stroke-width="1.3"/><circle cx="1883" cy="917.8" r="1.2" fill="#f01010"/><circle cx="1890" cy="917.8" r="1.2" fill="#f01010"/>
<path d="M1881.6 926.4q4.9-5.4 9.8 0" fill="none" stroke="#f01010" stroke-width="1.3"/>
<rect x="0" y="1011" width="1920" height="1" fill="#a0a0a0"/><rect x="0" y="1012" width="1920" height="1.6" fill="#f4f4f4"/>
<rect x="0" y="976" width="8.6" height="35" fill="url(#gGrip)"/><rect x="3.0" y="992.3" width="2.6" height="2.6" fill="#555"/>
<line x1="9.1" y1="976" x2="9.1" y2="1011" stroke="#9a9a9a" stroke-width="1"/>
<rect x="10.6" y="981" width="160.8" height="24.6" rx="2.4" fill="#fff" stroke="#8c8c8c" stroke-width="1.2"/>
<line x1="30" y1="994.1" x2="131" y2="994.1" stroke="#484848" stroke-width="1.5"/>
<path d="M156.2 992.2l5 4.8 5-4.8" fill="none" stroke="#505050" stroke-width="1.3"/>
<rect x="180.6" y="981" width="124.00000000000003" height="24.6" rx="2.4" fill="#fff" stroke="#8c8c8c" stroke-width="1.2"/>
<line x1="195" y1="994.1" x2="268.6" y2="994.1" stroke="#484848" stroke-width="1.5"/>
<path d="M288.6 992.2l5 4.8 5-4.8" fill="none" stroke="#505050" stroke-width="1.3"/>
<line x1="175.3" y1="980" x2="175.3" y2="1007" stroke="#7c7c7c" stroke-width="1.2"/>
<line x1="313" y1="976" x2="313" y2="1011" stroke="#9a9a9a" stroke-width="1"/><line x1="314" y1="976" x2="314" y2="1011" stroke="#fcfcfc" stroke-width="1"/>
<rect x="321.8" y="976" width="8.4" height="35" fill="url(#gGrip)"/><rect x="324.7" y="992.3" width="2.6" height="2.6" fill="#555"/>
<line x1="330.7" y1="976" x2="330.7" y2="1011" stroke="#9a9a9a" stroke-width="1"/>
<rect x="331.6" y="977.6" width="134.8" height="33" fill="#f1f1f1"/>
<rect x="334.6" y="980.6" width="12" height="12" fill="#e6e6fa" stroke="#a8a8a8" stroke-width=".9"/>
<rect x="334.6" y="995.8" width="12" height="12" fill="#8b0000" stroke="#a8a8a8" stroke-width=".9"/>
<rect x="349.7" y="980.6" width="12" height="12" fill="#ffd700" stroke="#a8a8a8" stroke-width=".9"/>
<rect x="349.7" y="995.8" width="12" height="12" fill="#688a96" stroke="#a8a8a8" stroke-width=".9"/>
<rect x="364.8" y="980.6" width="12" height="12" fill="#ffff00" stroke="#a8a8a8" stroke-width=".9"/>
<rect x="364.8" y="995.8" width="12" height="12" fill="#0000ff" stroke="#a8a8a8" stroke-width=".9"/>
<rect x="379.9" y="980.6" width="12" height="12" fill="#696969" stroke="#a8a8a8" stroke-width=".9"/>
<rect x="379.9" y="995.8" width="12" height="12" fill="#009000" stroke="#a8a8a8" stroke-width=".9"/>
<rect x="394.8" y="980.6" width="12" height="12" fill="#32cd32" stroke="#a8a8a8" stroke-width=".9"/>
<rect x="394.8" y="995.8" width="12" height="12" fill="#ff0000" stroke="#a8a8a8" stroke-width=".9"/>
<rect x="409.8" y="980.6" width="12" height="12" fill="#ffffe0" stroke="#a8a8a8" stroke-width=".9"/>
<rect x="409.8" y="995.8" width="12" height="12" fill="#000000" stroke="#a8a8a8" stroke-width=".9"/>
<rect x="424.7" y="980.6" width="12" height="12" fill="#ff6a1a" stroke="#a8a8a8" stroke-width=".9"/>
<rect x="424.7" y="995.8" width="12" height="12" fill="#3a7ca0" stroke="#a8a8a8" stroke-width=".9"/>
<rect x="438.6" y="980.6" width="12" height="12" fill="#98fb98" stroke="#a8a8a8" stroke-width=".9"/>
<rect x="438.6" y="995.8" width="12" height="12" fill="#92d0e4" stroke="#a8a8a8" stroke-width=".9"/>
<rect x="394" y="995" width="13.6" height="13.6" fill="none" stroke="#fff" stroke-width="1" stroke-dasharray="1.2,1.2"/>
<path d="M454.6 992.2h7l-3.5 3.8z" fill="#111"/>
<line x1="474" y1="976" x2="474" y2="1011" stroke="#9a9a9a" stroke-width="1"/><line x1="475" y1="976" x2="475" y2="1011" stroke="#fcfcfc" stroke-width="1"/>
<rect x="483.2" y="976" width="8.4" height="35" fill="url(#gGrip)"/><rect x="486.1" y="992.3" width="2.6" height="2.6" fill="#555"/>
<line x1="492.09999999999997" y1="976" x2="492.09999999999997" y2="1011" stroke="#9a9a9a" stroke-width="1"/>
<rect x="498.8" y="987.8" width="19.4" height="15" rx="1" fill="#fdfdfd" stroke="#86a8cc" stroke-width="1.2"/><rect x="500.2" y="988.8" width="5" height="1.4" fill="#86a8cc"/>
<path d="M501.4 999l3.4-3.4 2.4 1.6" fill="none" stroke="#e01818" stroke-width="1.3"/>
<text x="512.6" y="1001.4" text-anchor="middle" font-family="Liberation Serif,serif" font-size="13.4" fill="#111">1</text>
<rect x="532.6" y="987.8" width="19.4" height="15" rx="1" fill="#fdfdfd" stroke="#86a8cc" stroke-width="1.2"/><rect x="534.0" y="988.8" width="5" height="1.4" fill="#86a8cc"/>
<path d="M535.2 999l3.4-3.4 2.4 1.6" fill="none" stroke="#e01818" stroke-width="1.3"/>
<text x="546.4" y="1001.4" text-anchor="middle" font-family="Liberation Serif,serif" font-size="13.4" fill="#111">2</text>
<rect x="566.4" y="987.8" width="19.4" height="15" rx="1" fill="#fdfdfd" stroke="#86a8cc" stroke-width="1.2"/><rect x="567.8" y="988.8" width="5" height="1.4" fill="#86a8cc"/>
<path d="M569.0 999l3.4-3.4 2.4 1.6" fill="none" stroke="#e01818" stroke-width="1.3"/>
<text x="580.2" y="1001.4" text-anchor="middle" font-family="Liberation Serif,serif" font-size="13.4" fill="#111">3</text>
<rect x="600.1" y="987.8" width="19.4" height="15" rx="1" fill="#fdfdfd" stroke="#86a8cc" stroke-width="1.2"/><rect x="601.5" y="988.8" width="5" height="1.4" fill="#86a8cc"/>
<path d="M602.7 999l3.4-3.4 2.4 1.6" fill="none" stroke="#e01818" stroke-width="1.3"/>
<text x="613.9" y="1001.4" text-anchor="middle" font-family="Liberation Serif,serif" font-size="13.4" fill="#111">4</text>
<rect x="633.9" y="987.8" width="19.4" height="15" rx="1" fill="#fdfdfd" stroke="#86a8cc" stroke-width="1.2"/><rect x="635.3" y="988.8" width="5" height="1.4" fill="#86a8cc"/>
<path d="M636.5 999l3.4-3.4 2.4 1.6" fill="none" stroke="#e01818" stroke-width="1.3"/>
<text x="647.7" y="1001.4" text-anchor="middle" font-family="Liberation Serif,serif" font-size="13.4" fill="#111">5</text>
<rect x="667.7" y="987.8" width="19.4" height="15" rx="1" fill="#fdfdfd" stroke="#86a8cc" stroke-width="1.2"/><rect x="669.1" y="988.8" width="5" height="1.4" fill="#86a8cc"/>
<path d="M670.3 999l3.4-3.4 2.4 1.6" fill="none" stroke="#e01818" stroke-width="1.3"/>
<text x="681.5" y="1001.4" text-anchor="middle" font-family="Liberation Serif,serif" font-size="13.4" fill="#111">6</text>
<line x1="703" y1="974" x2="703" y2="1011" stroke="#888" stroke-width="1.2"/><line x1="704" y1="976" x2="704" y2="1011" stroke="#fcfcfc" stroke-width="1"/><defs><linearGradient id="gSun2" x1="0.2" y1="0" x2=".8" y2="1"><stop offset="0" stop-color="#ffd400"/><stop offset="1" stop-color="#e65a00"/></linearGradient></defs>
<circle cx="41" cy="1049.9" r="12.5" fill="url(#gSun2)"/>
<rect x="532.6" y="1035.8" width="13.9" height="13.8" rx=".8" fill="url(#gWin)"/>
<rect x="548.1" y="1035.8" width="13.9" height="13.8" rx=".8" fill="url(#gWin)"/>
<rect x="532.6" y="1051.2" width="13.9" height="13.8" rx=".8" fill="url(#gWin)"/>
<rect x="548.1" y="1051.2" width="13.9" height="13.8" rx=".8" fill="url(#gWin)"/>
<line x1="596.6" y1="1055.8" x2="591.8" y2="1061.4" stroke="#d8d8d8" stroke-width="3.2" stroke-linecap="round"/>
<circle cx="604.5" cy="1047.4" r="10" fill="#3a363e" stroke="#ececec" stroke-width="3"/>
<path d="M657.6 1036.2a14 14 0 1 1-7.4 25.8l-6.6 2.6 2-7a14 14 0 0 1 12-21.4z" fill="url(#gChat)"/>
<rect x="649.4" y="1044.6" width="11.6" height="10" rx="2.2" fill="#fff"/><path d="M662 1048.4l4.6-2.8v8.2l-4.6-2.8z" fill="#fff"/>
<rect x="712" y="1039.4" width="14.2" height="20" rx="1" fill="#fff" stroke="#2b579a" stroke-width="1.2"/>
<path d="M717.4 1043h6.6M717.4 1046.2h6.6M717.4 1049.4h6.6M717.4 1052.6h6.6M717.4 1055.8h6.6" stroke="#2b579a" stroke-width="1.3"/>
<path d="M698.8 1038.8l15-2.6v26.4l-15-2.6z" fill="#2b579a"/>
<text x="706.6" y="1054.4" text-anchor="middle" font-family="Liberation Sans,sans-serif" font-weight="bold" font-size="12.6" fill="#fff">W</text>
<rect x="708.8" y="1070" width="8.200000000000045" height="3.6" rx="1.8" fill="#9c9c9c"/>
<rect x="753" y="1035.2" width="30" height="29.4" rx="3" fill="url(#gMS)"/>
<path d="M760.4 1061.2v-8.6h3v8.6zM765.6 1061.2l1.6-15.6h3l-1.6 15.6zM771.2 1061.2l2.4-23h3l-2.4 23z" fill="#f08a20"/>
<path d="M808.4 1040.2q0-2 2-2h7.6l3 3h15q2 0 2 2v18.4q0 2-2 2h-25.600000000000001q-2 0-2-2z" fill="url(#gFolderY)"/>
<path d="M808.4 1045h29.6v16.6q0 2-2 2h-25.6q-2 0-2-2z" fill="#ffd24a"/>
<path d="M814.6 1063.6v-5q0-2 2-2h13.200000000000001q2 0 2 2v5z" fill="#1a84d8"/><rect x="818.4" y="1059.2" width="9.6" height="1.8" rx=".9" fill="#0c5aa8"/>
<path d="M877.4 1051.2L866.49 1044.90A12.6 12.6 0 0 1 888.31 1044.90z" fill="#ea4335"/>
<path d="M877.4 1051.2L888.31 1044.90A12.6 12.6 0 0 1 877.40 1063.80z" fill="#fbbc05"/>
<path d="M877.4 1051.2L877.40 1063.80A12.6 12.6 0 0 1 866.49 1044.90z" fill="#34a853"/>
<circle cx="877.4" cy="1051.2" r="7.14" fill="#fff"/><circle cx="877.4" cy="1051.2" r="5.54" fill="#4285f4"/>
<circle cx="888.8" cy="1039.6" r="9.4" fill="#f06a1a"/>
<text x="888.8" y="1043.8" text-anchor="middle" font-family="Liberation Sans,sans-serif" font-size="11.4" fill="#fff">N</text>
<rect x="873.8" y="1070" width="8.200000000000045" height="3.6" rx="1.8" fill="#9c9c9c"/>
<rect x="932" y="1039.4" width="14.2" height="20" rx="1" fill="#fff" stroke="#d04424" stroke-width="1.2"/>
<circle cx="939.6" cy="1046" r="3.4" fill="none" stroke="#d04424" stroke-width="1.2"/><path d="M936 1052.6h8M936 1055.8h8" stroke="#d04424" stroke-width="1.3"/>
<path d="M919.6 1038.8l15-2.6v26.4l-15-2.6z" fill="#d04424"/>
<text x="927.2" y="1054.4" text-anchor="middle" font-family="Liberation Sans,sans-serif" font-weight="bold" font-size="13" fill="#fff">P</text>
<path d="M985 1036.4h5.600000000000001l8 21h-21.6z" fill="#f08a10"/>
<path d="M982.9 1041.8h9.8l1.5 4h-12.8zM980.2 1049h15.2l1.5 4h-18.2z" fill="#f4f4f4"/>
<path d="M975.4 1056.6h24.8l1 5.4q.2 1.6-1.6 1.6h-23.6q-1.8 0-1.6-1.6z" fill="#f08a10"/>
<defs><linearGradient id="gEdB" x1="0" y1="0" x2=".6" y2="1"><stop offset="0" stop-color="#38b6f0"/><stop offset="1" stop-color="#0f60b4"/></linearGradient><linearGradient id="gEdG" x1="0" y1="0" x2="1" y2=".6"><stop offset="0" stop-color="#2ab6d8"/><stop offset=".6" stop-color="#4ed37a"/><stop offset="1" stop-color="#7fe46a"/></linearGradient></defs>
<circle cx="1043" cy="1050" r="14.8" fill="url(#gEdB)"/>
<path d="M1032 1040.2a14.8 14.8 0 0 1 25.8 9.400000000000001c0 3.4-2.4 5.4-5.6 5.4-3 0-4.6-1.4-4.2-3.2.6-1.4 1-2.2.4-3.800000000000001-1.2-3.2-4.800000000000001-5.2-8.6-5-3 .2-5.8 1.2-7.8 3.2z" fill="url(#gEdG)"/>
<path d="M1048 1051.6c-.4 1.8 1.2 3.4 4.2 3.4 3.2 0 5.600000000000001-2 5.600000000000001-5.4 0 4.6-2 8.8-5.6 11.600000000000001-3.4 1-7.4-1.2-8.4-4.4-.8-2.6.6-4.6 4.2-5.2z" fill="#201d24"/>
<path d="M1036.6 1045.4c-3.2 3.4-3.6 9.2-.6 13.600000000000001 2.2 3.2 5.800000000000001 5 9.600000000000001 5.4-6.6 1-13.4-2.6-16-9-1.4-3.6-1-7.4.6-10.600000000000001 1.6-1.2 4-.6 6.4.6z" fill="#0a4a94" opacity=".75"/>
<rect x="1097" y="1039.4" width="14.2" height="20" rx="1" fill="#fff" stroke="#3955a3" stroke-width="1.2"/>
<path d="M1104.6 1042.4l3 3-3 3-3-3z" fill="none" stroke="#3955a3" stroke-width="1.1"/><rect x="1101.8" y="1051.6" width="5.6" height="4.4" fill="none" stroke="#3955a3" stroke-width="1.1"/><path d="M1104.6 1048.4v3.2" stroke="#3955a3" stroke-width="1.1"/>
<path d="M1083.8 1038.8l15-2.6v26.4l-15-2.6z" fill="#3955a3"/>
<text x="1091.4" y="1054.4" text-anchor="middle" font-family="Liberation Sans,sans-serif" font-weight="bold" font-size="13" fill="#fff">V</text>
<rect x="1152" y="1039.4" width="14.2" height="20" rx="1" fill="#fff" stroke="#217346" stroke-width="1.2"/>
<path d="M1156.4 1043h3.4v2.4h-3.4zM1161 1043h3.4v2.4h-3.4zM1156.4 1047h3.4v2.4h-3.4zM1161 1047h3.4v2.4h-3.4zM1156.4 1051h3.4v2.4h-3.4zM1161 1051h3.4v2.4h-3.4zM1156.4 1055h3.4v2.4h-3.4zM1161 1055h3.4v2.4h-3.4z" fill="#217346"/>
<path d="M1138.8 1038.8l15-2.6v26.4l-15-2.6z" fill="#217346"/>
<text x="1146.4" y="1054.4" text-anchor="middle" font-family="Liberation Sans,sans-serif" font-weight="bold" font-size="13" fill="#fff">X</text>
<rect x="1148.8" y="1070" width="8.200000000000045" height="3.6" rx="1.8" fill="#9c9c9c"/>
<path d="M1207.5 1050L1195.72 1043.20A13.6 13.6 0 0 1 1219.28 1043.20z" fill="#ea4335"/>
<path d="M1207.5 1050L1219.28 1043.20A13.6 13.6 0 0 1 1207.50 1063.60z" fill="#fbbc05"/>
<path d="M1207.5 1050L1207.50 1063.60A13.6 13.6 0 0 1 1195.72 1043.20z" fill="#34a853"/>
<circle cx="1207.5" cy="1050" r="7.58" fill="#fff"/><circle cx="1207.5" cy="1050" r="5.98" fill="#4285f4"/>
<rect x="1251.4" y="1035.2" width="22.4" height="29.4" rx="2" fill="#76889a"/>
<rect x="1254.2" y="1038" width="16.8" height="5.6" fill="#5cc8f0"/>
<rect x="1254.2" y="1045.6" width="5" height="5" fill="#d8e0e8"/>
<rect x="1260.0" y="1045.6" width="5" height="5" fill="#d8e0e8"/>
<rect x="1265.8" y="1045.6" width="5" height="5" fill="#d8e0e8"/>
<rect x="1254.2" y="1051.4" width="5" height="5" fill="#d8e0e8"/>
<rect x="1260.0" y="1051.4" width="5" height="5" fill="#d8e0e8"/>
<rect x="1265.8" y="1051.4" width="5" height="5" fill="#0c5aa0"/>
<rect x="1254.2" y="1057.2" width="5" height="5" fill="#d8e0e8"/>
<rect x="1260.0" y="1057.2" width="5" height="5" fill="#d8e0e8"/>
<rect x="1265.8" y="1057.2" width="5" height="5" fill="#0c5aa0"/>
<rect x="1265.8" y="1051.4" width="5" height="10.8" fill="#0c5aa0"/>
<rect x="1303" y="1035.2" width="30" height="29.4" fill="#007a7a"/>
<path d="M1318 1037.4v5M1316 1039.4h4" stroke="#111" stroke-width="1.4"/>
<path d="M1318 1042.6c2 0 3 1.4 3 3 1.6-2 7-2.4 7.4 2 .4 3.6-3 5.6-4.4 7.4h-12c-1.4-1.8-4.800000000000001-3.8-4.4-7.4.4-4.4 5.800000000000001-4 7.4-2 0-1.6 1-3 3-3z" fill="#fff" stroke="#111" stroke-width="1"/>
<path d="M1311.6 1055h12.8v6.6h-12.8z" fill="#fff" stroke="#111" stroke-width="1"/><path d="M1311.6 1057.2h12.8M1311.6 1059.4h12.8" stroke="#111" stroke-width=".8"/>
<rect x="1348" y="1025.6" width="49.6" height="49" rx="5" fill="#37333c" stroke="#45414a" stroke-width="1"/>
<rect x="1358" y="1035.2" width="30" height="29.4" rx="3" fill="url(#gMS)"/>
<path d="M1365.4 1061.2v-8.6h3v8.6zM1370.6 1061.2l1.6-15.6h3l-1.6 15.6zM1376.2 1061.2l2.4-23h3l-2.4 23z" fill="#f08a20"/>
<rect x="1363" y="1070" width="19.6" height="3" rx="1.5" fill="#4cc2ff"/>
<rect x="1842.5" y="1017.4" width="25" height="2.6" fill="#cfcfcf"/><rect x="1872.5" y="1017.4" width="25" height="2.6" fill="#cfcfcf"/>
<path d="M1657 1054.2l8-8 8 8" fill="none" stroke="#f4f4f4" stroke-width="1.4"/>
<path d="M1688.6 1055.6a4.4 4.4 0 0 1-.4-8.6 6 6 0 0 1 11-2 4.600000000000001 4.600000000000001 0 0 1 2 8.8v1.8z" fill="#c0c0c0"/><path d="M1688.6 1055.6a4.4 4.4 0 0 1 1-8.6l8 8.6z" fill="#8a8a8a"/>
<circle cx="1699.4" cy="1054.8" r="5.6" fill="#e81123"/><path d="M1697.2 1052.6l4.4 4.4M1701.6 1052.6l-4.4 4.4" stroke="#fff" stroke-width="1.3"/>
<circle cx="1730" cy="1055" r="1.8" fill="#f4f4f4"/>
<path d="M1726.20 1051.65A5.2 5.2 0 0 1 1733.80 1051.65" fill="none" stroke="#f4f4f4" stroke-width="1.5"/>
<path d="M1723.42 1049.06A9 9 0 0 1 1736.58 1049.06" fill="none" stroke="#f4f4f4" stroke-width="1.5"/>
<path d="M1720.64 1046.47A12.8 12.8 0 0 1 1739.36 1046.47" fill="none" stroke="#f4f4f4" stroke-width="1.5"/>
<path d="M1750.6 1046.6h3.4l4.6-4.2v15.2l-4.6-4.2h-3.4z" fill="none" stroke="#f4f4f4" stroke-width="1.3" stroke-linejoin="round"/>
<path d="M1760.91 1047.24A3.6 3.6 0 0 1 1760.91 1052.76" fill="none" stroke="#f4f4f4" stroke-width="1.4"/>
<path d="M1762.91 1044.48A7 7 0 0 1 1762.91 1055.52" fill="none" stroke="#f4f4f4" stroke-width="1.4"/>
<path d="M1764.71 1041.59A10.4 10.4 0 0 1 1764.71 1058.41" fill="none" stroke="#f4f4f4" stroke-width="1.4"/>
<rect x="1785.4" y="1045.6" width="12.4" height="9.4" rx="1.4" fill="none" stroke="#f4f4f4" stroke-width="1.4"/><rect x="1798.4" y="1048.2" width="1.8" height="4.2" fill="#f4f4f4"/><rect x="1787.2" y="1047.4" width="4.4" height="5.8" fill="#f4f4f4"/>
<path d="M1781 1042v2.6M1784 1042v2.600000000000001" stroke="#f4f4f4" stroke-width="1.2"/><path d="M1779.8 1044.6h5.4v2.4q0 2-2.7 2.400000000000001v6.2" fill="#201d24" stroke="#f4f4f4" stroke-width="1.2"/>
</svg>
</body></html>
